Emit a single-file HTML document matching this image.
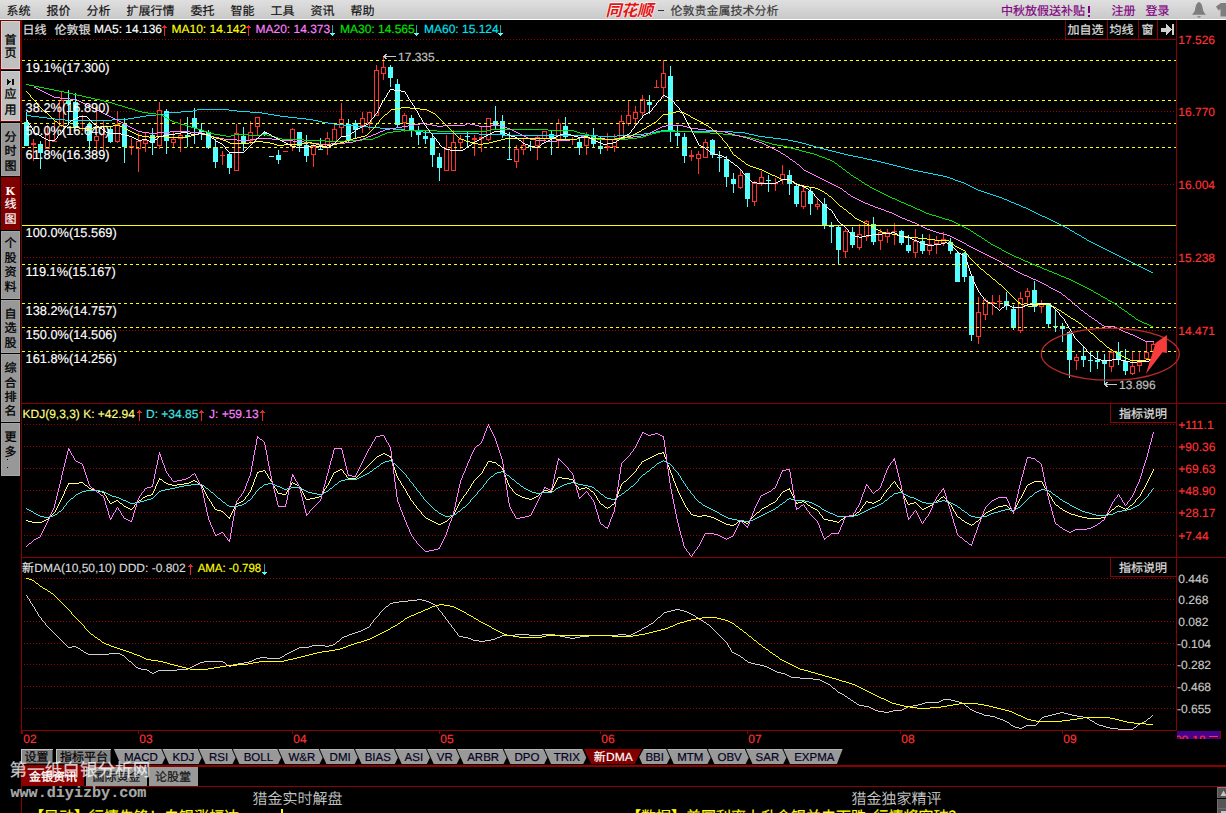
<!DOCTYPE html><html><head><meta charset="utf-8"><title>伦敦贵金属技术分析</title><style>html,body{margin:0;padding:0;background:#000;overflow:hidden}svg{display:block;font-family:"Liberation Sans","Noto Sans CJK SC",sans-serif}text{stroke-width:.16px}</style></head><body><svg width="1226" height="813" viewBox="0 0 1226 813" shape-rendering="crispEdges" text-rendering="geometricPrecision"><rect width="1226" height="813" fill="#000"/><defs><linearGradient id="mg" x1="0" y1="0" x2="0" y2="1"><stop offset="0" stop-color="#dfdfdf"/><stop offset="1" stop-color="#c9c9c9"/></linearGradient></defs><rect x="0" y="0" width="1226" height="19" fill="url(#mg)"/><rect x="0" y="19" width="1226" height="1" fill="#ffffff"/><text x="6.5" y="14.56" font-size="12" fill="#101010" stroke="#101010">系统</text><text x="46.5" y="14.56" font-size="12" fill="#101010" stroke="#101010">报价</text><text x="86.5" y="14.56" font-size="12" fill="#101010" stroke="#101010">分析</text><text x="126.5" y="14.56" font-size="12" fill="#101010" stroke="#101010">扩展行情</text><text x="190.5" y="14.56" font-size="12" fill="#101010" stroke="#101010">委托</text><text x="230.5" y="14.56" font-size="12" fill="#101010" stroke="#101010">智能</text><text x="270.5" y="14.56" font-size="12" fill="#101010" stroke="#101010">工具</text><text x="310.5" y="14.56" font-size="12" fill="#101010" stroke="#101010">资讯</text><text x="350.5" y="14.56" font-size="12" fill="#101010" stroke="#101010">帮助</text><g transform="translate(605.5 15.6) skewX(-14)" fill="#e01818" stroke="#fff" paint-order="stroke" shape-rendering="geometricPrecision"><text x="0 15.7 31.4" y="0" font-size="16" font-weight="bold" style="stroke-width:1.1px" paint-order="stroke">同花顺</text></g><rect x="658" y="10" width="6" height="1" fill="#333"/><text x="670.5" y="14.56" font-size="12" fill="#3a3a3a" stroke="#3a3a3a">伦敦贵金属技术分析</text><text x="1001" y="15.06" font-size="12" fill="#800080" stroke="#800080">中秋放假送补贴</text><rect x="1088" y="6" width="2" height="7" fill="#800080"/><rect x="1088" y="14.5" width="2" height="2" fill="#800080"/><text x="1111.5" y="15.06" font-size="12" fill="#800080" stroke="#800080">注册</text><text x="1145.5" y="15.06" font-size="12" fill="#800080" stroke="#800080">登录</text><path d="M1199 2 C1196 3 1195.5 7 1195 10 C1194.5 12.5 1193 13.5 1192 14.8 L1206 14.8 C1205 13.5 1203.5 12.5 1203 10 C1202.5 7 1202 3 1199 2Z M1196.8 16.2 L1201.2 16.2 L1199 18Z" fill="#7e7e7e" shape-rendering="geometricPrecision"/><path d="M1216 6.5 L1221 3 L1226 3 L1226 16.5 L1220.5 16.5 L1220.5 9 L1218.5 10.5Z" fill="#7e7e7e" shape-rendering="geometricPrecision"/><rect x="0" y="20" width="22" height="102" fill="#800000"/><rect x="1" y="21" width="19" height="48" fill="#ccd6d6"/><rect x="2" y="22" width="17" height="46" fill="#c0c0c0"/><rect x="1" y="70" width="19" height="1" fill="#000"/><rect x="1" y="71" width="19" height="50" fill="#ccd6d6"/><rect x="2" y="72" width="17" height="48" fill="#c0c0c0"/><rect x="1" y="123" width="19" height="53" fill="#a6a6a6"/><rect x="2" y="124" width="17" height="51" fill="#989898"/><rect x="1" y="231" width="19" height="68" fill="#a6a6a6"/><rect x="2" y="232" width="17" height="66" fill="#989898"/><rect x="1" y="300" width="19" height="53" fill="#a6a6a6"/><rect x="2" y="301" width="17" height="51" fill="#989898"/><rect x="1" y="354" width="19" height="68" fill="#a6a6a6"/><rect x="2" y="355" width="17" height="66" fill="#989898"/><rect x="1" y="423" width="19" height="53" fill="#a6a6a6"/><rect x="2" y="424" width="17" height="51" fill="#989898"/><rect x="1" y="177" width="19" height="53" fill="#800000"/><line x1="21.5" y1="122" x2="21.5" y2="476" stroke="#800000"/><text x="4.5" y="44.06" font-size="12" fill="#000" stroke="#000" style="stroke-width:.3px">首</text><text x="4.5" y="56.56" font-size="12" fill="#000" stroke="#000" style="stroke-width:.3px">页</text><text x="4.5" y="98.06" font-size="12" fill="#000" stroke="#000" style="stroke-width:.3px">应</text><text x="4.5" y="113.56" font-size="12" fill="#000" stroke="#000" style="stroke-width:.3px">用</text><text x="4.5" y="140.56" font-size="12" fill="#000" stroke="#000" style="stroke-width:.3px">分</text><text x="4.5" y="155.06" font-size="12" fill="#000" stroke="#000" style="stroke-width:.3px">时</text><text x="4.5" y="169.56" font-size="12" fill="#000" stroke="#000" style="stroke-width:.3px">图</text><text x="4.5" y="247.06" font-size="12" fill="#000" stroke="#000" style="stroke-width:.3px">个</text><text x="4.5" y="261.56" font-size="12" fill="#000" stroke="#000" style="stroke-width:.3px">股</text><text x="4.5" y="276.06" font-size="12" fill="#000" stroke="#000" style="stroke-width:.3px">资</text><text x="4.5" y="290.56" font-size="12" fill="#000" stroke="#000" style="stroke-width:.3px">料</text><text x="4.5" y="317.56" font-size="12" fill="#000" stroke="#000" style="stroke-width:.3px">自</text><text x="4.5" y="332.06" font-size="12" fill="#000" stroke="#000" style="stroke-width:.3px">选</text><text x="4.5" y="346.56" font-size="12" fill="#000" stroke="#000" style="stroke-width:.3px">股</text><text x="4.5" y="372.06" font-size="12" fill="#000" stroke="#000" style="stroke-width:.3px">综</text><text x="4.5" y="386.56" font-size="12" fill="#000" stroke="#000" style="stroke-width:.3px">合</text><text x="4.5" y="401.06" font-size="12" fill="#000" stroke="#000" style="stroke-width:.3px">排</text><text x="4.5" y="415.06" font-size="12" fill="#000" stroke="#000" style="stroke-width:.3px">名</text><text x="4.5" y="441.06" font-size="12" fill="#000" stroke="#000" style="stroke-width:.3px">更</text><text x="4.5" y="455.56" font-size="12" fill="#000" stroke="#000" style="stroke-width:.3px">多</text><text x="4.5" y="208.06" font-size="12" fill="#fff" stroke="#fff">线</text><text x="4.5" y="222.56" font-size="12" fill="#fff" stroke="#fff">图</text><text x="10.5" y="194.5" font-size="12" fill="#fff" stroke="#fff" text-anchor="middle" font-weight="bold" font-family="Liberation Serif">K</text><rect x="7" y="459" width="1.4" height="1.4" fill="#000"/><rect x="7" y="467" width="1.4" height="1.4" fill="#000"/><path d="M7 78.5 L11 81.8 L7 85Z M11.5 78.5h2v6.5h-2z" fill="#101010"/><line x1="21.5" y1="476" x2="21.5" y2="734" stroke="#8c0000"/><line x1="21.5" y1="765" x2="21.5" y2="813" stroke="#8c0000"/><line x1="1176.5" y1="20" x2="1176.5" y2="731" stroke="#8c0000"/><line x1="22" y1="403.5" x2="1226" y2="403.5" stroke="#8c0000"/><line x1="22" y1="557.5" x2="1226" y2="557.5" stroke="#8c0000"/><line x1="22" y1="730.5" x2="1177" y2="730.5" stroke="#8c0000"/><line x1="24" y1="39.5" x2="1065" y2="39.5" stroke="#a00000" stroke-dasharray="1 2"/><line x1="24" y1="111.5" x2="1175" y2="111.5" stroke="#a00000" stroke-dasharray="1 2"/><line x1="24" y1="184.5" x2="1175" y2="184.5" stroke="#a00000" stroke-dasharray="1 2"/><line x1="24" y1="257.5" x2="1175" y2="257.5" stroke="#a00000" stroke-dasharray="1 2"/><line x1="24" y1="330.5" x2="1175" y2="330.5" stroke="#a00000" stroke-dasharray="1 2"/><line x1="24" y1="424.5" x2="1175" y2="424.5" stroke="#a00000" stroke-dasharray="1 2"/><line x1="24" y1="446.5" x2="1175" y2="446.5" stroke="#a00000" stroke-dasharray="1 2"/><line x1="24" y1="468.5" x2="1175" y2="468.5" stroke="#a00000" stroke-dasharray="1 2"/><line x1="24" y1="490.5" x2="1175" y2="490.5" stroke="#a00000" stroke-dasharray="1 2"/><line x1="24" y1="512.5" x2="1175" y2="512.5" stroke="#a00000" stroke-dasharray="1 2"/><line x1="24" y1="535.5" x2="1175" y2="535.5" stroke="#a00000" stroke-dasharray="1 2"/><line x1="24" y1="578.5" x2="1175" y2="578.5" stroke="#a00000" stroke-dasharray="1 2"/><line x1="24" y1="599.5" x2="1175" y2="599.5" stroke="#a00000" stroke-dasharray="1 2"/><line x1="24" y1="621.5" x2="1175" y2="621.5" stroke="#a00000" stroke-dasharray="1 2"/><line x1="24" y1="643.5" x2="1175" y2="643.5" stroke="#a00000" stroke-dasharray="1 2"/><line x1="24" y1="664.5" x2="1175" y2="664.5" stroke="#a00000" stroke-dasharray="1 2"/><line x1="24" y1="686.5" x2="1175" y2="686.5" stroke="#a00000" stroke-dasharray="1 2"/><line x1="24" y1="708.5" x2="1175" y2="708.5" stroke="#a00000" stroke-dasharray="1 2"/><rect x="24" y="122" width="5" height="24" fill="#54ffff"/><rect x="26" y="112" width="1" height="10" fill="#54ffff"/><rect x="31" y="143" width="5" height="2" fill="#ff3232"/><rect x="33" y="139" width="1" height="4" fill="#ff3232"/><rect x="33" y="145" width="1" height="16" fill="#ff3232"/><rect x="38" y="144" width="5" height="9" fill="#54ffff"/><rect x="40" y="141" width="1" height="3" fill="#54ffff"/><rect x="40" y="153" width="1" height="16" fill="#54ffff"/><rect x="45.5" y="133.5" width="4" height="15" fill="#000" stroke="#ff3232"/><rect x="47" y="125" width="1" height="8" fill="#ff3232"/><rect x="52" y="141" width="5" height="1" fill="#ff3232"/><rect x="54" y="120" width="1" height="22" fill="#ff3232"/><rect x="59.5" y="100.5" width="4" height="25" fill="#000" stroke="#ff3232"/><rect x="61" y="92" width="1" height="8" fill="#ff3232"/><rect x="61" y="126" width="1" height="1" fill="#ff3232"/><rect x="66" y="100" width="5" height="4" fill="#54ffff"/><rect x="68" y="90" width="1" height="10" fill="#54ffff"/><rect x="68" y="104" width="1" height="19" fill="#54ffff"/><rect x="73" y="102" width="5" height="25" fill="#54ffff"/><rect x="75" y="93" width="1" height="9" fill="#54ffff"/><rect x="80" y="123" width="5" height="1" fill="#ff3232"/><rect x="82" y="115" width="1" height="16" fill="#ff3232"/><rect x="87" y="124" width="5" height="17" fill="#54ffff"/><rect x="89" y="122" width="1" height="2" fill="#54ffff"/><rect x="89" y="141" width="1" height="9" fill="#54ffff"/><rect x="94.5" y="136.5" width="4" height="4" fill="#000" stroke="#ff3232"/><rect x="96" y="111" width="1" height="25" fill="#ff3232"/><rect x="96" y="141" width="1" height="9" fill="#ff3232"/><rect x="101" y="134" width="5" height="1" fill="#ff3232"/><rect x="103" y="121" width="1" height="29" fill="#ff3232"/><rect x="108" y="129" width="5" height="13" fill="#54ffff"/><rect x="110" y="126" width="1" height="3" fill="#54ffff"/><rect x="110" y="142" width="1" height="1" fill="#54ffff"/><rect x="115.5" y="124.5" width="4" height="17" fill="#000" stroke="#ff3232"/><rect x="117" y="111" width="1" height="13" fill="#ff3232"/><rect x="117" y="142" width="1" height="1" fill="#ff3232"/><rect x="122" y="124" width="5" height="23" fill="#54ffff"/><rect x="124" y="118" width="1" height="6" fill="#54ffff"/><rect x="124" y="147" width="1" height="16" fill="#54ffff"/><rect x="129" y="146" width="5" height="2" fill="#ff3232"/><rect x="131" y="138" width="1" height="8" fill="#ff3232"/><rect x="131" y="148" width="1" height="7" fill="#ff3232"/><rect x="136.5" y="141.5" width="4" height="7" fill="#000" stroke="#ff3232"/><rect x="138" y="133" width="1" height="8" fill="#ff3232"/><rect x="138" y="149" width="1" height="23" fill="#ff3232"/><rect x="143.5" y="140.5" width="4" height="3" fill="#000" stroke="#ff3232"/><rect x="145" y="132" width="1" height="8" fill="#ff3232"/><rect x="145" y="144" width="1" height="8" fill="#ff3232"/><rect x="150" y="135" width="5" height="8" fill="#54ffff"/><rect x="152" y="128" width="1" height="7" fill="#54ffff"/><rect x="152" y="143" width="1" height="12" fill="#54ffff"/><rect x="157.5" y="110.5" width="4" height="35" fill="#000" stroke="#ff3232"/><rect x="159" y="102" width="1" height="8" fill="#ff3232"/><rect x="159" y="146" width="1" height="3" fill="#ff3232"/><rect x="164" y="111" width="5" height="30" fill="#54ffff"/><rect x="166" y="109" width="1" height="2" fill="#54ffff"/><rect x="166" y="141" width="1" height="13" fill="#54ffff"/><rect x="171.5" y="139.5" width="4" height="3" fill="#000" stroke="#ff3232"/><rect x="173" y="131" width="1" height="8" fill="#ff3232"/><rect x="173" y="143" width="1" height="5" fill="#ff3232"/><rect x="178.5" y="135.5" width="4" height="3" fill="#000" stroke="#ff3232"/><rect x="180" y="119" width="1" height="16" fill="#ff3232"/><rect x="180" y="139" width="1" height="13" fill="#ff3232"/><rect x="185" y="135" width="5" height="2" fill="#54ffff"/><rect x="187" y="117" width="1" height="18" fill="#54ffff"/><rect x="187" y="137" width="1" height="10" fill="#54ffff"/><rect x="192" y="118" width="5" height="10" fill="#54ffff"/><rect x="194" y="108" width="1" height="10" fill="#54ffff"/><rect x="194" y="128" width="1" height="16" fill="#54ffff"/><rect x="199" y="130" width="5" height="2" fill="#54ffff"/><rect x="201" y="123" width="1" height="7" fill="#54ffff"/><rect x="201" y="132" width="1" height="8" fill="#54ffff"/><rect x="206" y="132" width="5" height="16" fill="#54ffff"/><rect x="208" y="130" width="1" height="2" fill="#54ffff"/><rect x="208" y="148" width="1" height="1" fill="#54ffff"/><rect x="213" y="147" width="5" height="15" fill="#54ffff"/><rect x="215" y="139" width="1" height="8" fill="#54ffff"/><rect x="215" y="162" width="1" height="6" fill="#54ffff"/><rect x="220" y="155" width="5" height="1" fill="#ff3232"/><rect x="222" y="151" width="1" height="14" fill="#ff3232"/><rect x="227" y="154" width="5" height="14" fill="#54ffff"/><rect x="229" y="153" width="1" height="1" fill="#54ffff"/><rect x="229" y="168" width="1" height="6" fill="#54ffff"/><rect x="234.5" y="133.5" width="4" height="37" fill="#000" stroke="#ff3232"/><rect x="236" y="124" width="1" height="9" fill="#ff3232"/><rect x="241" y="136" width="5" height="7" fill="#54ffff"/><rect x="243" y="127" width="1" height="9" fill="#54ffff"/><rect x="243" y="143" width="1" height="8" fill="#54ffff"/><rect x="248.5" y="132.5" width="4" height="8" fill="#000" stroke="#ff3232"/><rect x="250" y="121" width="1" height="11" fill="#ff3232"/><rect x="250" y="141" width="1" height="3" fill="#ff3232"/><rect x="255.5" y="117.5" width="4" height="9" fill="#000" stroke="#ff3232"/><rect x="257" y="127" width="1" height="8" fill="#ff3232"/><rect x="262" y="133" width="5" height="1" fill="#54ffff"/><rect x="264" y="131" width="1" height="5" fill="#54ffff"/><rect x="269" y="156" width="5" height="1" fill="#54ffff"/><rect x="276" y="155" width="5" height="5" fill="#54ffff"/><rect x="278" y="150" width="1" height="5" fill="#54ffff"/><rect x="278" y="160" width="1" height="4" fill="#54ffff"/><rect x="283" y="151" width="5" height="1" fill="#ff3232"/><rect x="290.5" y="129.5" width="4" height="17" fill="#000" stroke="#ff3232"/><rect x="292" y="128" width="1" height="1" fill="#ff3232"/><rect x="292" y="147" width="1" height="4" fill="#ff3232"/><rect x="297" y="132" width="5" height="14" fill="#54ffff"/><rect x="299" y="146" width="1" height="6" fill="#54ffff"/><rect x="304" y="145" width="5" height="11" fill="#54ffff"/><rect x="306" y="135" width="1" height="10" fill="#54ffff"/><rect x="306" y="156" width="1" height="6" fill="#54ffff"/><rect x="311.5" y="146.5" width="4" height="8" fill="#000" stroke="#ff3232"/><rect x="313" y="144" width="1" height="2" fill="#ff3232"/><rect x="313" y="155" width="1" height="12" fill="#ff3232"/><rect x="318" y="149" width="5" height="1" fill="#54ffff"/><rect x="320" y="138" width="1" height="12" fill="#54ffff"/><rect x="325.5" y="138.5" width="4" height="9" fill="#000" stroke="#ff3232"/><rect x="327" y="132" width="1" height="6" fill="#ff3232"/><rect x="327" y="148" width="1" height="7" fill="#ff3232"/><rect x="332.5" y="129.5" width="4" height="12" fill="#000" stroke="#ff3232"/><rect x="334" y="125" width="1" height="4" fill="#ff3232"/><rect x="339.5" y="119.5" width="4" height="8" fill="#000" stroke="#ff3232"/><rect x="341" y="103" width="1" height="16" fill="#ff3232"/><rect x="341" y="128" width="1" height="8" fill="#ff3232"/><rect x="346" y="124" width="5" height="16" fill="#54ffff"/><rect x="348" y="119" width="1" height="5" fill="#54ffff"/><rect x="348" y="140" width="1" height="3" fill="#54ffff"/><rect x="353" y="123" width="5" height="7" fill="#54ffff"/><rect x="355" y="120" width="1" height="3" fill="#54ffff"/><rect x="355" y="130" width="1" height="9" fill="#54ffff"/><rect x="360.5" y="118.5" width="4" height="7" fill="#000" stroke="#ff3232"/><rect x="362" y="112" width="1" height="6" fill="#ff3232"/><rect x="362" y="126" width="1" height="7" fill="#ff3232"/><rect x="367.5" y="112.5" width="4" height="10" fill="#000" stroke="#ff3232"/><rect x="369" y="123" width="1" height="7" fill="#ff3232"/><rect x="374.5" y="70.5" width="4" height="45" fill="#000" stroke="#ff3232"/><rect x="376" y="65" width="1" height="5" fill="#ff3232"/><rect x="381.5" y="67.5" width="4" height="6" fill="#000" stroke="#ff3232"/><rect x="383" y="57" width="1" height="10" fill="#ff3232"/><rect x="383" y="74" width="1" height="6" fill="#ff3232"/><rect x="388" y="67" width="5" height="11" fill="#54ffff"/><rect x="390" y="65" width="1" height="2" fill="#54ffff"/><rect x="390" y="78" width="1" height="9" fill="#54ffff"/><rect x="395" y="84" width="5" height="41" fill="#54ffff"/><rect x="397" y="79" width="1" height="5" fill="#54ffff"/><rect x="397" y="125" width="1" height="3" fill="#54ffff"/><rect x="402.5" y="115.5" width="4" height="7" fill="#000" stroke="#ff3232"/><rect x="404" y="113" width="1" height="2" fill="#ff3232"/><rect x="404" y="123" width="1" height="9" fill="#ff3232"/><rect x="409" y="118" width="5" height="13" fill="#54ffff"/><rect x="411" y="115" width="1" height="3" fill="#54ffff"/><rect x="411" y="131" width="1" height="6" fill="#54ffff"/><rect x="416" y="132" width="5" height="3" fill="#54ffff"/><rect x="418" y="126" width="1" height="6" fill="#54ffff"/><rect x="418" y="135" width="1" height="10" fill="#54ffff"/><rect x="423" y="136" width="5" height="3" fill="#54ffff"/><rect x="425" y="131" width="1" height="5" fill="#54ffff"/><rect x="425" y="139" width="1" height="5" fill="#54ffff"/><rect x="430" y="138" width="5" height="17" fill="#54ffff"/><rect x="432" y="133" width="1" height="5" fill="#54ffff"/><rect x="432" y="155" width="1" height="12" fill="#54ffff"/><rect x="437" y="157" width="5" height="11" fill="#54ffff"/><rect x="439" y="153" width="1" height="4" fill="#54ffff"/><rect x="439" y="168" width="1" height="13" fill="#54ffff"/><rect x="444.5" y="149.5" width="4" height="21" fill="#000" stroke="#ff3232"/><rect x="446" y="135" width="1" height="14" fill="#ff3232"/><rect x="451.5" y="142.5" width="4" height="28" fill="#000" stroke="#ff3232"/><rect x="453" y="130" width="1" height="12" fill="#ff3232"/><rect x="458.5" y="139.5" width="4" height="3" fill="#000" stroke="#ff3232"/><rect x="460" y="135" width="1" height="4" fill="#ff3232"/><rect x="460" y="143" width="1" height="6" fill="#ff3232"/><rect x="465" y="136" width="5" height="1" fill="#54ffff"/><rect x="467" y="131" width="1" height="16" fill="#54ffff"/><rect x="472" y="138" width="5" height="2" fill="#ff3232"/><rect x="474" y="135" width="1" height="3" fill="#ff3232"/><rect x="474" y="140" width="1" height="16" fill="#ff3232"/><rect x="479" y="137" width="5" height="2" fill="#ff3232"/><rect x="481" y="126" width="1" height="11" fill="#ff3232"/><rect x="481" y="139" width="1" height="13" fill="#ff3232"/><rect x="486.5" y="118.5" width="4" height="21" fill="#000" stroke="#ff3232"/><rect x="488" y="140" width="1" height="1" fill="#ff3232"/><rect x="493" y="121" width="5" height="5" fill="#54ffff"/><rect x="495" y="106" width="1" height="15" fill="#54ffff"/><rect x="495" y="126" width="1" height="3" fill="#54ffff"/><rect x="500" y="121" width="5" height="14" fill="#54ffff"/><rect x="502" y="115" width="1" height="6" fill="#54ffff"/><rect x="502" y="135" width="1" height="3" fill="#54ffff"/><rect x="507" y="159" width="5" height="1" fill="#54ffff"/><rect x="509" y="132" width="1" height="28" fill="#54ffff"/><rect x="514.5" y="149.5" width="4" height="12" fill="#000" stroke="#ff3232"/><rect x="516" y="145" width="1" height="4" fill="#ff3232"/><rect x="516" y="162" width="1" height="6" fill="#ff3232"/><rect x="521.5" y="145.5" width="4" height="4" fill="#000" stroke="#ff3232"/><rect x="523" y="139" width="1" height="6" fill="#ff3232"/><rect x="523" y="150" width="1" height="5" fill="#ff3232"/><rect x="528" y="146" width="5" height="1" fill="#54ffff"/><rect x="530" y="141" width="1" height="10" fill="#54ffff"/><rect x="535.5" y="137.5" width="4" height="8" fill="#000" stroke="#ff3232"/><rect x="537" y="136" width="1" height="1" fill="#ff3232"/><rect x="537" y="146" width="1" height="14" fill="#ff3232"/><rect x="542.5" y="131.5" width="4" height="7" fill="#000" stroke="#ff3232"/><rect x="544" y="139" width="1" height="3" fill="#ff3232"/><rect x="549" y="134" width="5" height="5" fill="#54ffff"/><rect x="551" y="131" width="1" height="3" fill="#54ffff"/><rect x="551" y="139" width="1" height="16" fill="#54ffff"/><rect x="556.5" y="123.5" width="4" height="17" fill="#000" stroke="#ff3232"/><rect x="558" y="119" width="1" height="4" fill="#ff3232"/><rect x="558" y="141" width="1" height="6" fill="#ff3232"/><rect x="563" y="126" width="5" height="11" fill="#54ffff"/><rect x="565" y="117" width="1" height="9" fill="#54ffff"/><rect x="565" y="137" width="1" height="3" fill="#54ffff"/><rect x="570" y="139" width="5" height="1" fill="#ff3232"/><rect x="572" y="137" width="1" height="8" fill="#ff3232"/><rect x="577" y="142" width="5" height="6" fill="#54ffff"/><rect x="579" y="137" width="1" height="5" fill="#54ffff"/><rect x="579" y="148" width="1" height="7" fill="#54ffff"/><rect x="584.5" y="137.5" width="4" height="8" fill="#000" stroke="#ff3232"/><rect x="586" y="132" width="1" height="5" fill="#ff3232"/><rect x="586" y="146" width="1" height="9" fill="#ff3232"/><rect x="591" y="136" width="5" height="8" fill="#54ffff"/><rect x="593" y="128" width="1" height="8" fill="#54ffff"/><rect x="593" y="144" width="1" height="3" fill="#54ffff"/><rect x="598" y="146" width="5" height="3" fill="#54ffff"/><rect x="600" y="137" width="1" height="9" fill="#54ffff"/><rect x="600" y="149" width="1" height="5" fill="#54ffff"/><rect x="605" y="146" width="5" height="2" fill="#ff3232"/><rect x="607" y="133" width="1" height="13" fill="#ff3232"/><rect x="607" y="148" width="1" height="3" fill="#ff3232"/><rect x="612.5" y="139.5" width="4" height="7" fill="#000" stroke="#ff3232"/><rect x="614" y="134" width="1" height="5" fill="#ff3232"/><rect x="614" y="147" width="1" height="5" fill="#ff3232"/><rect x="619.5" y="121.5" width="4" height="16" fill="#000" stroke="#ff3232"/><rect x="621" y="115" width="1" height="6" fill="#ff3232"/><rect x="626.5" y="115.5" width="4" height="8" fill="#000" stroke="#ff3232"/><rect x="628" y="100" width="1" height="15" fill="#ff3232"/><rect x="628" y="124" width="1" height="2" fill="#ff3232"/><rect x="633.5" y="112.5" width="4" height="6" fill="#000" stroke="#ff3232"/><rect x="635" y="106" width="1" height="6" fill="#ff3232"/><rect x="635" y="119" width="1" height="6" fill="#ff3232"/><rect x="640.5" y="99.5" width="4" height="13" fill="#000" stroke="#ff3232"/><rect x="642" y="95" width="1" height="4" fill="#ff3232"/><rect x="642" y="113" width="1" height="4" fill="#ff3232"/><rect x="647" y="102" width="5" height="3" fill="#54ffff"/><rect x="649" y="95" width="1" height="7" fill="#54ffff"/><rect x="649" y="105" width="1" height="9" fill="#54ffff"/><rect x="654" y="87" width="5" height="1" fill="#ff3232"/><rect x="656" y="80" width="1" height="8" fill="#ff3232"/><rect x="661.5" y="73.5" width="4" height="14" fill="#000" stroke="#ff3232"/><rect x="663" y="60" width="1" height="13" fill="#ff3232"/><rect x="663" y="88" width="1" height="10" fill="#ff3232"/><rect x="668" y="76" width="5" height="56" fill="#54ffff"/><rect x="670" y="66" width="1" height="10" fill="#54ffff"/><rect x="670" y="132" width="1" height="10" fill="#54ffff"/><rect x="675" y="133" width="5" height="3" fill="#54ffff"/><rect x="677" y="126" width="1" height="7" fill="#54ffff"/><rect x="677" y="136" width="1" height="10" fill="#54ffff"/><rect x="682" y="137" width="5" height="19" fill="#54ffff"/><rect x="684" y="133" width="1" height="4" fill="#54ffff"/><rect x="684" y="156" width="1" height="7" fill="#54ffff"/><rect x="689" y="155" width="5" height="2" fill="#ff3232"/><rect x="691" y="150" width="1" height="5" fill="#ff3232"/><rect x="691" y="157" width="1" height="4" fill="#ff3232"/><rect x="696.5" y="154.5" width="4" height="4" fill="#000" stroke="#ff3232"/><rect x="698" y="151" width="1" height="3" fill="#ff3232"/><rect x="698" y="159" width="1" height="15" fill="#ff3232"/><rect x="703.5" y="142.5" width="4" height="15" fill="#000" stroke="#ff3232"/><rect x="705" y="139" width="1" height="3" fill="#ff3232"/><rect x="710" y="140" width="5" height="15" fill="#54ffff"/><rect x="712" y="139" width="1" height="1" fill="#54ffff"/><rect x="712" y="155" width="1" height="3" fill="#54ffff"/><rect x="717" y="157" width="5" height="1" fill="#54ffff"/><rect x="719" y="151" width="1" height="21" fill="#54ffff"/><rect x="724" y="159" width="5" height="18" fill="#54ffff"/><rect x="726" y="156" width="1" height="3" fill="#54ffff"/><rect x="726" y="177" width="1" height="10" fill="#54ffff"/><rect x="731" y="179" width="5" height="5" fill="#54ffff"/><rect x="733" y="173" width="1" height="6" fill="#54ffff"/><rect x="733" y="184" width="1" height="9" fill="#54ffff"/><rect x="738.5" y="175.5" width="4" height="12" fill="#000" stroke="#ff3232"/><rect x="740" y="170" width="1" height="5" fill="#ff3232"/><rect x="740" y="188" width="1" height="1" fill="#ff3232"/><rect x="745" y="173" width="5" height="26" fill="#54ffff"/><rect x="747" y="199" width="1" height="8" fill="#54ffff"/><rect x="752.5" y="183.5" width="4" height="18" fill="#000" stroke="#ff3232"/><rect x="754" y="181" width="1" height="2" fill="#ff3232"/><rect x="754" y="202" width="1" height="4" fill="#ff3232"/><rect x="759.5" y="177.5" width="4" height="5" fill="#000" stroke="#ff3232"/><rect x="761" y="171" width="1" height="6" fill="#ff3232"/><rect x="761" y="183" width="1" height="3" fill="#ff3232"/><rect x="766" y="180" width="5" height="1" fill="#54ffff"/><rect x="768" y="175" width="1" height="17" fill="#54ffff"/><rect x="773" y="183" width="5" height="1" fill="#ff3232"/><rect x="775" y="178" width="1" height="13" fill="#ff3232"/><rect x="780.5" y="174.5" width="4" height="5" fill="#000" stroke="#ff3232"/><rect x="782" y="165" width="1" height="9" fill="#ff3232"/><rect x="782" y="180" width="1" height="4" fill="#ff3232"/><rect x="787" y="175" width="5" height="9" fill="#54ffff"/><rect x="789" y="170" width="1" height="5" fill="#54ffff"/><rect x="789" y="184" width="1" height="11" fill="#54ffff"/><rect x="794" y="186" width="5" height="18" fill="#54ffff"/><rect x="796" y="185" width="1" height="1" fill="#54ffff"/><rect x="796" y="204" width="1" height="3" fill="#54ffff"/><rect x="801.5" y="191.5" width="4" height="15" fill="#000" stroke="#ff3232"/><rect x="803" y="187" width="1" height="4" fill="#ff3232"/><rect x="803" y="207" width="1" height="2" fill="#ff3232"/><rect x="808" y="191" width="5" height="13" fill="#54ffff"/><rect x="810" y="188" width="1" height="3" fill="#54ffff"/><rect x="810" y="204" width="1" height="11" fill="#54ffff"/><rect x="815.5" y="204.5" width="4" height="2" fill="#000" stroke="#ff3232"/><rect x="817" y="198" width="1" height="6" fill="#ff3232"/><rect x="817" y="207" width="1" height="3" fill="#ff3232"/><rect x="822" y="204" width="5" height="22" fill="#54ffff"/><rect x="824" y="198" width="1" height="6" fill="#54ffff"/><rect x="824" y="226" width="1" height="3" fill="#54ffff"/><rect x="829" y="226" width="5" height="1" fill="#54ffff"/><rect x="831" y="222" width="1" height="21" fill="#54ffff"/><rect x="836" y="227" width="5" height="23" fill="#54ffff"/><rect x="838" y="226" width="1" height="1" fill="#54ffff"/><rect x="838" y="250" width="1" height="14" fill="#54ffff"/><rect x="843.5" y="231.5" width="4" height="20" fill="#000" stroke="#ff3232"/><rect x="845" y="229" width="1" height="2" fill="#ff3232"/><rect x="845" y="252" width="1" height="6" fill="#ff3232"/><rect x="850" y="232" width="5" height="13" fill="#54ffff"/><rect x="852" y="227" width="1" height="5" fill="#54ffff"/><rect x="852" y="245" width="1" height="3" fill="#54ffff"/><rect x="857.5" y="234.5" width="4" height="13" fill="#000" stroke="#ff3232"/><rect x="859" y="224" width="1" height="10" fill="#ff3232"/><rect x="859" y="248" width="1" height="2" fill="#ff3232"/><rect x="864.5" y="221.5" width="4" height="15" fill="#000" stroke="#ff3232"/><rect x="866" y="220" width="1" height="1" fill="#ff3232"/><rect x="866" y="237" width="1" height="4" fill="#ff3232"/><rect x="871" y="224" width="5" height="18" fill="#54ffff"/><rect x="873" y="217" width="1" height="7" fill="#54ffff"/><rect x="873" y="242" width="1" height="3" fill="#54ffff"/><rect x="878.5" y="232.5" width="4" height="8" fill="#000" stroke="#ff3232"/><rect x="880" y="229" width="1" height="3" fill="#ff3232"/><rect x="880" y="241" width="1" height="9" fill="#ff3232"/><rect x="885.5" y="232.5" width="4" height="4" fill="#000" stroke="#ff3232"/><rect x="887" y="229" width="1" height="3" fill="#ff3232"/><rect x="887" y="237" width="1" height="6" fill="#ff3232"/><rect x="892" y="231" width="5" height="1" fill="#ff3232"/><rect x="894" y="223" width="1" height="22" fill="#ff3232"/><rect x="899" y="231" width="5" height="12" fill="#54ffff"/><rect x="901" y="230" width="1" height="1" fill="#54ffff"/><rect x="901" y="243" width="1" height="2" fill="#54ffff"/><rect x="906" y="245" width="5" height="6" fill="#54ffff"/><rect x="908" y="235" width="1" height="10" fill="#54ffff"/><rect x="908" y="251" width="1" height="2" fill="#54ffff"/><rect x="913.5" y="241.5" width="4" height="11" fill="#000" stroke="#ff3232"/><rect x="915" y="229" width="1" height="12" fill="#ff3232"/><rect x="915" y="253" width="1" height="5" fill="#ff3232"/><rect x="920" y="241" width="5" height="10" fill="#54ffff"/><rect x="922" y="234" width="1" height="7" fill="#54ffff"/><rect x="922" y="251" width="1" height="3" fill="#54ffff"/><rect x="927.5" y="244.5" width="4" height="6" fill="#000" stroke="#ff3232"/><rect x="929" y="234" width="1" height="10" fill="#ff3232"/><rect x="929" y="251" width="1" height="4" fill="#ff3232"/><rect x="934.5" y="240.5" width="4" height="3" fill="#000" stroke="#ff3232"/><rect x="936" y="236" width="1" height="4" fill="#ff3232"/><rect x="936" y="244" width="1" height="10" fill="#ff3232"/><rect x="941.5" y="239.5" width="4" height="3" fill="#000" stroke="#ff3232"/><rect x="943" y="232" width="1" height="7" fill="#ff3232"/><rect x="943" y="243" width="1" height="3" fill="#ff3232"/><rect x="948" y="242" width="5" height="9" fill="#54ffff"/><rect x="950" y="238" width="1" height="4" fill="#54ffff"/><rect x="950" y="251" width="1" height="3" fill="#54ffff"/><rect x="955" y="253" width="5" height="29" fill="#54ffff"/><rect x="957" y="252" width="1" height="1" fill="#54ffff"/><rect x="962" y="253" width="5" height="24" fill="#54ffff"/><rect x="964" y="252" width="1" height="1" fill="#54ffff"/><rect x="964" y="277" width="1" height="5" fill="#54ffff"/><rect x="969" y="276" width="5" height="59" fill="#54ffff"/><rect x="971" y="275" width="1" height="1" fill="#54ffff"/><rect x="971" y="335" width="1" height="6" fill="#54ffff"/><rect x="976.5" y="312.5" width="4" height="24" fill="#000" stroke="#ff3232"/><rect x="978" y="297" width="1" height="15" fill="#ff3232"/><rect x="978" y="337" width="1" height="7" fill="#ff3232"/><rect x="983.5" y="300.5" width="4" height="14" fill="#000" stroke="#ff3232"/><rect x="985" y="298" width="1" height="2" fill="#ff3232"/><rect x="985" y="315" width="1" height="5" fill="#ff3232"/><rect x="990" y="302" width="5" height="2" fill="#ff3232"/><rect x="992" y="295" width="1" height="7" fill="#ff3232"/><rect x="992" y="304" width="1" height="11" fill="#ff3232"/><rect x="997" y="301" width="5" height="1" fill="#ff3232"/><rect x="999" y="295" width="1" height="13" fill="#ff3232"/><rect x="1004" y="301" width="5" height="5" fill="#54ffff"/><rect x="1006" y="292" width="1" height="9" fill="#54ffff"/><rect x="1006" y="306" width="1" height="4" fill="#54ffff"/><rect x="1011" y="309" width="5" height="19" fill="#54ffff"/><rect x="1013" y="305" width="1" height="4" fill="#54ffff"/><rect x="1013" y="328" width="1" height="2" fill="#54ffff"/><rect x="1018.5" y="298.5" width="4" height="32" fill="#000" stroke="#ff3232"/><rect x="1020" y="292" width="1" height="6" fill="#ff3232"/><rect x="1020" y="331" width="1" height="2" fill="#ff3232"/><rect x="1025.5" y="291.5" width="4" height="5" fill="#000" stroke="#ff3232"/><rect x="1027" y="288" width="1" height="3" fill="#ff3232"/><rect x="1027" y="297" width="1" height="8" fill="#ff3232"/><rect x="1032" y="290" width="5" height="17" fill="#54ffff"/><rect x="1034" y="281" width="1" height="9" fill="#54ffff"/><rect x="1034" y="307" width="1" height="5" fill="#54ffff"/><rect x="1039.5" y="304.5" width="4" height="2" fill="#000" stroke="#ff3232"/><rect x="1041" y="300" width="1" height="4" fill="#ff3232"/><rect x="1041" y="307" width="1" height="6" fill="#ff3232"/><rect x="1046" y="304" width="5" height="20" fill="#54ffff"/><rect x="1048" y="303" width="1" height="1" fill="#54ffff"/><rect x="1048" y="324" width="1" height="3" fill="#54ffff"/><rect x="1053" y="326" width="5" height="1" fill="#54ffff"/><rect x="1055" y="309" width="1" height="23" fill="#54ffff"/><rect x="1060" y="326" width="5" height="3" fill="#54ffff"/><rect x="1062" y="323" width="1" height="3" fill="#54ffff"/><rect x="1062" y="329" width="1" height="13" fill="#54ffff"/><rect x="1067" y="332" width="5" height="28" fill="#54ffff"/><rect x="1069" y="331" width="1" height="1" fill="#54ffff"/><rect x="1069" y="360" width="1" height="18" fill="#54ffff"/><rect x="1074.5" y="357.5" width="4" height="3" fill="#000" stroke="#ff3232"/><rect x="1076" y="354" width="1" height="3" fill="#ff3232"/><rect x="1076" y="361" width="1" height="9" fill="#ff3232"/><rect x="1081" y="356" width="5" height="4" fill="#54ffff"/><rect x="1083" y="347" width="1" height="9" fill="#54ffff"/><rect x="1083" y="360" width="1" height="7" fill="#54ffff"/><rect x="1088" y="360" width="5" height="1" fill="#54ffff"/><rect x="1090" y="352" width="1" height="20" fill="#54ffff"/><rect x="1095" y="360" width="5" height="2" fill="#54ffff"/><rect x="1097" y="352" width="1" height="8" fill="#54ffff"/><rect x="1097" y="362" width="1" height="7" fill="#54ffff"/><rect x="1102" y="360" width="5" height="4" fill="#54ffff"/><rect x="1104" y="354" width="1" height="6" fill="#54ffff"/><rect x="1104" y="364" width="1" height="21" fill="#54ffff"/><rect x="1109.5" y="352.5" width="4" height="14" fill="#000" stroke="#ff3232"/><rect x="1111" y="350" width="1" height="2" fill="#ff3232"/><rect x="1111" y="367" width="1" height="5" fill="#ff3232"/><rect x="1116" y="352" width="5" height="7" fill="#54ffff"/><rect x="1118" y="342" width="1" height="10" fill="#54ffff"/><rect x="1118" y="359" width="1" height="6" fill="#54ffff"/><rect x="1123" y="361" width="5" height="10" fill="#54ffff"/><rect x="1125" y="349" width="1" height="12" fill="#54ffff"/><rect x="1125" y="371" width="1" height="4" fill="#54ffff"/><rect x="1130.5" y="366.5" width="4" height="7" fill="#000" stroke="#ff3232"/><rect x="1132" y="352" width="1" height="14" fill="#ff3232"/><rect x="1132" y="374" width="1" height="1" fill="#ff3232"/><rect x="1137.5" y="362.5" width="4" height="3" fill="#000" stroke="#ff3232"/><rect x="1139" y="352" width="1" height="10" fill="#ff3232"/><rect x="1139" y="366" width="1" height="6" fill="#ff3232"/><rect x="1144.5" y="352.5" width="4" height="6" fill="#000" stroke="#ff3232"/><rect x="1146" y="342" width="1" height="10" fill="#ff3232"/><rect x="1146" y="359" width="1" height="1" fill="#ff3232"/><rect x="1151.5" y="344.5" width="4" height="7" fill="#000" stroke="#ff3232"/><rect x="1153" y="342" width="1" height="2" fill="#ff3232"/><rect x="1153" y="352" width="1" height="1" fill="#ff3232"/><line x1="22" y1="60.5" x2="1176" y2="60.5" stroke="#ffff00" stroke-dasharray="3 3"/><line x1="22" y1="100.5" x2="1176" y2="100.5" stroke="#ffff00" stroke-dasharray="3 3"/><line x1="22" y1="123.5" x2="1176" y2="123.5" stroke="#ffff00" stroke-dasharray="3 3"/><line x1="22" y1="147.5" x2="1176" y2="147.5" stroke="#ffff00" stroke-dasharray="3 3"/><line x1="22" y1="225.5" x2="1176" y2="225.5" stroke="#ffff00"/><line x1="22" y1="264.5" x2="1176" y2="264.5" stroke="#ffff00" stroke-dasharray="3 3"/><line x1="22" y1="303.5" x2="1176" y2="303.5" stroke="#ffff00" stroke-dasharray="3 3"/><line x1="22" y1="327.5" x2="1176" y2="327.5" stroke="#ffff00" stroke-dasharray="3 3"/><line x1="22" y1="351.5" x2="1176" y2="351.5" stroke="#ffff00" stroke-dasharray="3 3"/><path fill="none" stroke="#02e2f4" d="M197 109.5h32M193 110.5h4M229 110.5h8M181 111.5h12M237 111.5h13M169 112.5h12M250 112.5h12M165 113.5h4M262 113.5h6M156 114.5h9M268 114.5h6M26 115.5h5M146 115.5h10M274 115.5h6M31 116.5h8M140 116.5h6M280 116.5h8M39 117.5h8M134 117.5h6M288 117.5h9M47 118.5h8M128 118.5h6M297 118.5h9M55 119.5h10M112 119.5h16M306 119.5h7M65 120.5h47M313 120.5h5M318 121.5h4M322 122.5h6M328 123.5h6M334 124.5h10M344 125.5h12M356 126.5h12M368 127.5h12M380 128.5h13M393 129.5h12M405 130.5h10M661 130.5h14M415 131.5h8M656 131.5h5M675 131.5h58M423 132.5h8M651 132.5h5M733 132.5h12M431 133.5h48M644 133.5h7M745 133.5h4M479 134.5h24M634 134.5h10M749 134.5h5M503 135.5h95M617 135.5h17M754 135.5h4M598 136.5h19M758 136.5h7M765 137.5h8M773 138.5h8M781 139.5h7M788 140.5h5M793 141.5h5M798 142.5h4M802 143.5h4M806 144.5h3M809 145.5h4M813 146.5h3M816 147.5h4M820 148.5h4M824 149.5h4M828 150.5h4M832 151.5h4M836 152.5h4M840 153.5h4M844 154.5h4M848 155.5h5M853 156.5h5M858 157.5h5M863 158.5h4M867 159.5h5M872 160.5h5M877 161.5h4M881 162.5h4M885 163.5h4M889 164.5h4M893 165.5h4M897 166.5h4M901 167.5h4M905 168.5h4M909 169.5h4M913 170.5h5M918 171.5h5M923 172.5h5M928 173.5h5M933 174.5h5M938 175.5h5M943 176.5h4M947 177.5h3M950 178.5h3M953 179.5h2M955 180.5h3M958 181.5h3M961 182.5h3M964 183.5h2M966 184.5h2M968 185.5h2M970 186.5h2M972 187.5h2M974 188.5h2M976 189.5h2M978 190.5h3M981 191.5h3M984 192.5h3M987 193.5h3M990 194.5h3M993 195.5h3M996 196.5h3M999 197.5h3M1002 198.5h2M1004 199.5h3M1007 200.5h2M1009 201.5h2M1011 202.5h3M1014 203.5h2M1016 204.5h3M1019 205.5h2M1021 206.5h2M1023 207.5h3M1026 208.5h2M1028 209.5h2M1030 210.5h2M1032 211.5h2M1034 212.5h2M1036 213.5h2M1038 214.5h2M1040 215.5h2M1042 216.5h3M1045 217.5h2M1047 218.5h2M1049 219.5h2M1051 220.5h2M1053 221.5h2M1055 222.5h2M1057 223.5h2M1059 224.5h2M1061 225.5h2M1063 226.5h2M1065 227.5h2M1067 228.5h2M1070 230.5h2M1072 231.5h2M1075 233.5h2M1077 234.5h2M1079 235.5h2M1082 237.5h2M1084 238.5h2M1087 240.5h2M1089 241.5h2M1091 242.5h2M1093 243.5h2M1095 244.5h2M1097 245.5h2M1099 246.5h2M1101 247.5h2M1103 248.5h2M1105 249.5h2M1107 250.5h2M1109 251.5h2M1111 252.5h2M1113 253.5h2M1115 254.5h2M1117 255.5h2M1119 256.5h2M1121 257.5h2M1123 258.5h2M1125 259.5h2M1127 260.5h2M1129 261.5h2M1131 262.5h2M1133 263.5h2M1135 264.5h2M1137 265.5h2M1139 266.5h2M1141 267.5h2M1143 268.5h2M1145 269.5h2M1147 270.5h2M1149 271.5h2M1151 272.5h2M1069.5 229v1M1074.5 232v1M1081.5 236v1M1086.5 239v1"/><path fill="none" stroke="#00e600" d="M26 84.5h3M29 85.5h5M34 86.5h5M39 87.5h5M44 88.5h5M49 89.5h5M54 90.5h5M59 91.5h5M64 92.5h4M68 93.5h5M73 94.5h4M77 95.5h5M82 96.5h4M86 97.5h5M91 98.5h4M95 99.5h5M100 100.5h4M104 101.5h4M108 102.5h4M112 103.5h3M115 104.5h3M118 105.5h4M122 106.5h3M125 107.5h3M128 108.5h4M132 109.5h3M135 110.5h3M138 111.5h4M142 112.5h6M148 113.5h8M156 114.5h5M161 115.5h2M163 116.5h2M165 117.5h2M168 119.5h2M170 120.5h2M172 121.5h2M174 122.5h4M178 123.5h3M181 124.5h4M185 125.5h3M188 126.5h3M191 127.5h4M195 128.5h3M198 129.5h3M491 129.5h57M201 130.5h3M401 130.5h36M487 130.5h4M548 130.5h26M204 131.5h3M393 131.5h8M437 131.5h50M574 131.5h3M660 131.5h34M207 132.5h3M387 132.5h6M577 132.5h3M656 132.5h4M694 132.5h16M210 133.5h4M385 133.5h2M580 133.5h5M652 133.5h4M710 133.5h13M214 134.5h6M235 134.5h13M262 134.5h5M382 134.5h3M585 134.5h4M649 134.5h3M723 134.5h9M220 135.5h6M231 135.5h4M248 135.5h14M267 135.5h4M380 135.5h2M589 135.5h2M646 135.5h3M732 135.5h8M226 136.5h5M271 136.5h4M378 136.5h2M591 136.5h2M643 136.5h3M740 136.5h6M275 137.5h3M375 137.5h3M593 137.5h2M637 137.5h6M746 137.5h5M278 138.5h4M373 138.5h2M595 138.5h2M628 138.5h9M751 138.5h4M282 139.5h22M362 139.5h11M597 139.5h31M755 139.5h4M304 140.5h21M345 140.5h17M759 140.5h3M325 141.5h20M762 141.5h3M765 142.5h4M769 143.5h3M772 144.5h5M777 145.5h6M783 146.5h4M787 147.5h4M791 148.5h4M795 149.5h4M799 150.5h3M802 151.5h4M806 152.5h4M810 153.5h4M814 154.5h3M817 155.5h2M819 156.5h3M822 157.5h3M825 158.5h2M827 159.5h3M830 160.5h2M832 161.5h2M835 163.5h2M839 166.5h2M843 169.5h2M847 172.5h2M851 175.5h2M854 177.5h2M856 178.5h2M859 180.5h2M862 182.5h2M865 184.5h2M867 185.5h2M870 187.5h2M872 188.5h2M874 189.5h2M876 190.5h2M878 191.5h2M880 192.5h2M882 193.5h2M884 194.5h2M886 195.5h2M888 196.5h2M890 197.5h2M892 198.5h3M895 199.5h2M897 200.5h2M899 201.5h2M901 202.5h3M904 203.5h2M906 204.5h2M908 205.5h3M911 206.5h2M913 207.5h2M915 208.5h2M917 209.5h3M920 210.5h2M922 211.5h2M924 212.5h2M926 213.5h3M929 214.5h3M932 215.5h4M936 216.5h3M939 217.5h3M942 218.5h3M945 219.5h4M949 220.5h3M952 221.5h2M954 222.5h2M956 223.5h2M958 224.5h2M960 225.5h2M962 226.5h2M964 227.5h2M966 228.5h2M968 229.5h2M971 231.5h2M974 233.5h2M977 235.5h2M979 236.5h2M982 238.5h2M985 240.5h2M988 242.5h2M991 244.5h2M993 245.5h2M995 246.5h2M997 247.5h2M999 248.5h2M1002 250.5h2M1004 251.5h2M1006 252.5h2M1008 253.5h2M1010 254.5h2M1012 255.5h2M1014 256.5h2M1016 257.5h3M1019 258.5h2M1021 259.5h2M1023 260.5h2M1025 261.5h3M1028 262.5h2M1030 263.5h2M1032 264.5h3M1035 265.5h2M1037 266.5h3M1040 267.5h2M1042 268.5h2M1044 269.5h3M1047 270.5h2M1049 271.5h3M1052 272.5h2M1054 273.5h3M1057 274.5h2M1059 275.5h2M1061 276.5h3M1064 277.5h2M1066 278.5h3M1069 279.5h2M1071 280.5h2M1073 281.5h2M1075 282.5h2M1077 283.5h2M1079 284.5h2M1081 285.5h2M1083 286.5h2M1085 287.5h2M1087 288.5h2M1089 289.5h2M1091 290.5h2M1094 292.5h2M1096 293.5h2M1098 294.5h2M1101 296.5h2M1103 297.5h2M1105 298.5h2M1108 300.5h2M1110 301.5h2M1112 302.5h2M1115 304.5h2M1119 307.5h2M1122 309.5h2M1125 311.5h2M1129 314.5h2M1132 316.5h2M1136 319.5h2M1138 320.5h2M1140 321.5h2M1142 322.5h2M1144 323.5h3M1147 324.5h2M1149 325.5h2M1151 326.5h2M167.5 118v1M834.5 162v1M837.5 164v1M838.5 165v1M841.5 167v1M842.5 168v1M845.5 170v1M846.5 171v1M849.5 173v1M850.5 174v1M853.5 176v1M858.5 179v1M861.5 181v1M864.5 183v1M869.5 186v1M970.5 230v1M973.5 232v1M976.5 234v1M981.5 237v1M984.5 239v1M987.5 241v1M990.5 243v1M1001.5 249v1M1093.5 291v1M1100.5 295v1M1107.5 299v1M1114.5 303v1M1117.5 305v1M1118.5 306v1M1121.5 308v1M1124.5 310v1M1127.5 312v1M1128.5 313v1M1131.5 315v1M1134.5 317v1M1135.5 318v1"/><path fill="none" stroke="#ff80ff" d="M34 87.5h2M36 88.5h2M38 89.5h2M40 90.5h2M42 91.5h2M44 92.5h2M46 93.5h2M48 94.5h2M50 95.5h2M52 96.5h2M54 97.5h6M60 98.5h10M70 99.5h7M77 100.5h2M79 101.5h2M81 102.5h2M83 103.5h2M85 104.5h2M87 105.5h2M89 106.5h2M91 107.5h2M93 108.5h2M95 109.5h2M97 110.5h2M99 111.5h2M101 112.5h2M103 113.5h2M105 114.5h2M107 115.5h2M109 116.5h2M111 117.5h2M113 118.5h2M115 119.5h2M117 120.5h2M119 121.5h2M121 122.5h2M420 123.5h6M467 123.5h3M124 124.5h2M414 124.5h6M426 124.5h6M465 124.5h2M470 124.5h5M126 125.5h2M408 125.5h6M432 125.5h5M443 125.5h22M475 125.5h4M491 125.5h10M666 125.5h17M128 126.5h2M402 126.5h6M437 126.5h6M479 126.5h12M501 126.5h3M662 126.5h4M683 126.5h4M130 127.5h2M396 127.5h6M504 127.5h3M660 127.5h2M687 127.5h4M132 128.5h2M390 128.5h6M507 128.5h3M658 128.5h2M691 128.5h7M134 129.5h2M385 129.5h5M510 129.5h2M656 129.5h2M698 129.5h8M136 130.5h2M383 130.5h2M512 130.5h2M654 130.5h2M706 130.5h11M138 131.5h4M170 131.5h20M380 131.5h3M514 131.5h2M652 131.5h2M717 131.5h8M142 132.5h7M157 132.5h13M190 132.5h12M378 132.5h2M516 132.5h2M650 132.5h2M725 132.5h3M149 133.5h8M202 133.5h3M376 133.5h2M518 133.5h2M648 133.5h2M728 133.5h4M205 134.5h2M373 134.5h3M520 134.5h2M646 134.5h2M732 134.5h3M207 135.5h3M371 135.5h2M522 135.5h2M641 135.5h5M735 135.5h4M210 136.5h4M368 136.5h3M524 136.5h2M581 136.5h3M633 136.5h8M739 136.5h4M214 137.5h5M366 137.5h2M526 137.5h2M579 137.5h2M584 137.5h6M625 137.5h8M743 137.5h4M219 138.5h5M256 138.5h16M363 138.5h3M528 138.5h2M577 138.5h2M590 138.5h12M615 138.5h10M747 138.5h3M224 139.5h13M250 139.5h6M272 139.5h8M360 139.5h3M530 139.5h6M570 139.5h7M602 139.5h13M750 139.5h3M237 140.5h13M280 140.5h13M356 140.5h4M536 140.5h10M557 140.5h13M753 140.5h3M293 141.5h11M353 141.5h3M546 141.5h11M756 141.5h3M304 142.5h6M345 142.5h8M759 142.5h3M310 143.5h9M331 143.5h14M762 143.5h2M319 144.5h12M764 144.5h2M766 145.5h2M768 146.5h2M770 147.5h2M772 148.5h2M774 149.5h2M776 150.5h2M778 151.5h2M781 153.5h2M783 154.5h2M786 156.5h2M790 159.5h2M793 161.5h2M797 164.5h2M804 170.5h2M806 171.5h2M808 172.5h2M810 173.5h2M812 174.5h2M814 175.5h2M816 176.5h2M818 177.5h2M820 178.5h2M822 179.5h2M824 180.5h2M826 181.5h2M828 182.5h2M830 183.5h2M832 184.5h2M834 185.5h2M836 186.5h2M838 187.5h2M840 188.5h2M844 191.5h2M848 194.5h2M851 196.5h2M853 197.5h2M855 198.5h2M857 199.5h2M859 200.5h2M861 201.5h2M863 202.5h2M865 203.5h3M868 204.5h2M870 205.5h3M873 206.5h2M875 207.5h3M878 208.5h3M881 209.5h3M884 210.5h2M886 211.5h3M889 212.5h3M892 213.5h2M894 214.5h2M896 215.5h2M898 216.5h2M900 217.5h2M902 218.5h3M905 219.5h2M907 220.5h3M910 221.5h2M912 222.5h3M915 223.5h2M917 224.5h2M919 225.5h2M921 226.5h2M923 227.5h2M925 228.5h2M927 229.5h3M930 230.5h3M933 231.5h3M936 232.5h3M939 233.5h4M943 234.5h4M947 235.5h3M950 236.5h2M952 237.5h2M954 238.5h2M956 239.5h2M958 240.5h2M960 241.5h2M962 242.5h2M964 243.5h2M967 245.5h2M969 246.5h2M971 247.5h2M973 248.5h2M975 249.5h2M977 250.5h2M979 251.5h2M981 252.5h2M983 253.5h2M985 254.5h2M987 255.5h2M989 256.5h2M991 257.5h2M993 258.5h2M995 259.5h2M997 260.5h2M999 261.5h2M1002 263.5h2M1004 264.5h2M1007 266.5h2M1009 267.5h2M1011 268.5h2M1014 270.5h2M1016 271.5h2M1018 272.5h2M1020 273.5h2M1022 274.5h2M1024 275.5h3M1027 276.5h2M1029 277.5h2M1031 278.5h2M1033 279.5h3M1036 280.5h2M1038 281.5h2M1040 282.5h2M1042 283.5h2M1044 284.5h2M1046 285.5h2M1049 287.5h2M1051 288.5h2M1053 289.5h2M1055 290.5h2M1057 291.5h2M1059 292.5h2M1063 295.5h2M1068 299.5h2M1075 305.5h2M1081 310.5h2M1085 313.5h2M1089 316.5h2M1092 318.5h2M1095 320.5h2M1099 323.5h2M1102 325.5h2M1104 326.5h11M1115 327.5h2M1117 328.5h2M1119 329.5h2M1121 330.5h2M1123 331.5h2M1125 332.5h3M1128 333.5h2M1130 334.5h3M1133 335.5h2M1135 336.5h2M1137 337.5h2M1139 338.5h2M1141 339.5h2M1143 340.5h2M1145 341.5h9M123.5 123v1M780.5 152v1M785.5 155v1M788.5 157v1M789.5 158v1M792.5 160v1M795.5 162v1M796.5 163v1M799.5 165v1M800.5 166v1M801.5 167v1M802.5 168v1M803.5 169v1M842.5 189v1M843.5 190v1M846.5 192v1M847.5 193v1M850.5 195v1M966.5 244v1M1001.5 262v1M1006.5 265v1M1013.5 269v1M1048.5 286v1M1061.5 293v1M1062.5 294v1M1065.5 296v1M1066.5 297v1M1067.5 298v1M1070.5 300v1M1071.5 301v1M1072.5 302v1M1073.5 303v1M1074.5 304v1M1077.5 306v1M1078.5 307v1M1079.5 308v1M1080.5 309v1M1083.5 311v1M1084.5 312v1M1087.5 314v1M1088.5 315v1M1091.5 317v1M1094.5 319v1M1097.5 321v1M1098.5 322v1M1101.5 324v1"/><path fill="none" stroke="#ffff00" d="M401 107.5h9M395 108.5h6M410 108.5h10M391 109.5h4M420 109.5h7M427 110.5h2M429 111.5h2M676 111.5h4M45 112.5h2M431 112.5h2M673 112.5h3M680 112.5h4M433 113.5h2M668 113.5h5M684 113.5h2M385 114.5h2M663 114.5h5M686 114.5h2M688 115.5h2M691 117.5h2M693 118.5h2M695 119.5h2M697 120.5h2M55 121.5h2M699 121.5h2M654 122.5h2M701 122.5h2M652 123.5h2M704 124.5h2M60 125.5h3M113 125.5h7M649 125.5h2M706 125.5h2M63 126.5h4M102 126.5h11M120 126.5h2M647 126.5h2M67 127.5h12M93 127.5h9M122 127.5h2M709 127.5h2M79 128.5h14M124 128.5h2M644 128.5h2M126 129.5h2M642 129.5h2M128 130.5h2M130 131.5h2M639 131.5h2M714 131.5h2M132 132.5h2M637 132.5h2M134 133.5h2M199 133.5h3M635 133.5h2M136 134.5h2M195 134.5h4M202 134.5h4M633 134.5h2M138 135.5h4M191 135.5h4M206 135.5h4M365 135.5h2M631 135.5h2M142 136.5h7M156 136.5h10M187 136.5h4M210 136.5h3M361 136.5h4M627 136.5h4M149 137.5h7M166 137.5h21M213 137.5h3M357 137.5h4M579 137.5h10M623 137.5h4M216 138.5h4M353 138.5h4M459 138.5h2M505 138.5h51M577 138.5h2M589 138.5h16M617 138.5h6M220 139.5h3M350 139.5h3M461 139.5h3M501 139.5h4M556 139.5h21M605 139.5h12M223 140.5h3M347 140.5h3M464 140.5h2M497 140.5h4M226 141.5h2M255 141.5h8M344 141.5h3M466 141.5h4M493 141.5h4M228 142.5h2M249 142.5h6M263 142.5h7M308 142.5h4M340 142.5h4M470 142.5h4M489 142.5h4M230 143.5h19M270 143.5h4M302 143.5h6M312 143.5h4M337 143.5h3M474 143.5h4M483 143.5h6M274 144.5h3M284 144.5h18M316 144.5h3M333 144.5h4M478 144.5h5M277 145.5h7M319 145.5h4M327 145.5h6M323 146.5h4M734 155.5h2M738 158.5h2M742 161.5h2M746 164.5h2M748 165.5h2M750 166.5h3M753 167.5h3M756 168.5h3M759 169.5h3M762 170.5h2M764 171.5h2M766 172.5h2M768 173.5h2M770 174.5h2M772 175.5h3M775 176.5h2M777 177.5h2M779 178.5h2M781 179.5h6M787 180.5h5M792 181.5h2M795 183.5h2M797 184.5h3M800 185.5h4M804 186.5h5M809 187.5h6M815 188.5h3M818 189.5h2M820 190.5h2M822 191.5h2M825 193.5h2M829 196.5h2M840 206.5h2M844 209.5h2M849 213.5h2M855 218.5h2M857 219.5h2M859 220.5h2M861 221.5h2M863 222.5h2M865 223.5h2M867 224.5h2M869 225.5h2M871 226.5h2M874 228.5h2M876 229.5h2M878 230.5h2M880 231.5h2M882 232.5h4M886 233.5h6M892 234.5h5M897 235.5h4M901 236.5h7M908 237.5h10M918 238.5h9M927 239.5h8M935 240.5h14M951 243.5h2M955 246.5h2M957 247.5h2M959 248.5h2M961 249.5h2M963 250.5h2M981 269.5h2M987 274.5h2M993 279.5h2M999 284.5h2M1018 302.5h2M1021 304.5h3M1038 304.5h12M1024 305.5h4M1033 305.5h5M1050 305.5h2M1028 306.5h5M1052 306.5h2M1054 307.5h2M1057 309.5h2M1059 310.5h2M1062 312.5h2M1065 314.5h2M1068 316.5h2M1071 318.5h2M1073 319.5h2M1076 321.5h2M1079 323.5h2M1084 327.5h2M1091 333.5h2M1100 341.5h2M1107 347.5h2M1110 349.5h2M1113 351.5h2M1116 353.5h2M1118 354.5h2M1120 355.5h2M1122 356.5h2M1124 357.5h2M1126 358.5h2M1128 359.5h2M1146 359.5h5M1130 360.5h16M26.5 91v1M27.5 92v1M28.5 93v1M29.5 94v1M30.5 95v2M31.5 97v1M32.5 98v1M33.5 99v1M34.5 100v1M35.5 101v1M36.5 102v1M37.5 103v2M38.5 105v1M39.5 106v1M40.5 107v1M41.5 108v1M42.5 109v1M43.5 110v1M44.5 111v1M47.5 113v1M48.5 114v1M49.5 115v1M50.5 116v1M51.5 117v1M52.5 118v1M53.5 119v1M54.5 120v1M57.5 122v1M58.5 123v1M59.5 124v1M367.5 134v1M368.5 133v1M369.5 132v1M370.5 131v1M371.5 130v1M372.5 129v1M373.5 128v1M374.5 127v1M375.5 125v2M376.5 124v1M377.5 123v1M378.5 122v1M379.5 120v2M380.5 119v1M381.5 118v1M382.5 117v1M383.5 116v1M384.5 115v1M387.5 113v1M388.5 112v1M389.5 111v1M390.5 110v1M435.5 114v1M436.5 115v1M437.5 116v1M438.5 117v1M439.5 118v1M440.5 119v1M441.5 120v1M442.5 121v1M443.5 122v1M444.5 123v1M445.5 124v1M446.5 125v1M447.5 126v1M448.5 127v1M449.5 128v1M450.5 129v1M451.5 130v1M452.5 131v1M453.5 132v1M454.5 133v1M455.5 134v1M456.5 135v1M457.5 136v1M458.5 137v1M641.5 130v1M646.5 127v1M651.5 124v1M656.5 121v1M657.5 120v1M658.5 119v1M659.5 118v1M660.5 117v1M661.5 116v1M662.5 115v1M690.5 116v1M703.5 123v1M708.5 126v1M711.5 128v1M712.5 129v1M713.5 130v1M716.5 132v1M717.5 133v1M718.5 134v1M719.5 135v1M720.5 136v1M721.5 137v1M722.5 138v2M723.5 140v1M724.5 141v1M725.5 142v1M726.5 143v1M727.5 144v2M728.5 146v1M729.5 147v2M730.5 149v2M731.5 151v1M732.5 152v2M733.5 154v1M736.5 156v1M737.5 157v1M740.5 159v1M741.5 160v1M744.5 162v1M745.5 163v1M794.5 182v1M824.5 192v1M827.5 194v1M828.5 195v1M831.5 197v1M832.5 198v1M833.5 199v1M834.5 200v1M835.5 201v1M836.5 202v1M837.5 203v1M838.5 204v1M839.5 205v1M842.5 207v1M843.5 208v1M846.5 210v1M847.5 211v1M848.5 212v1M851.5 214v1M852.5 215v1M853.5 216v1M854.5 217v1M873.5 227v1M949.5 241v1M950.5 242v1M953.5 244v1M954.5 245v1M965.5 251v2M966.5 253v1M967.5 254v1M968.5 255v2M969.5 257v1M970.5 258v1M971.5 259v1M972.5 260v1M973.5 261v1M974.5 262v1M975.5 263v1M976.5 264v1M977.5 265v1M978.5 266v1M979.5 267v1M980.5 268v1M983.5 270v1M984.5 271v1M985.5 272v1M986.5 273v1M989.5 275v1M990.5 276v1M991.5 277v1M992.5 278v1M995.5 280v1M996.5 281v1M997.5 282v1M998.5 283v1M1001.5 285v1M1002.5 286v1M1003.5 287v1M1004.5 288v1M1005.5 289v1M1006.5 290v1M1007.5 291v1M1008.5 292v1M1009.5 293v1M1010.5 294v1M1011.5 295v1M1012.5 296v1M1013.5 297v1M1014.5 298v1M1015.5 299v1M1016.5 300v1M1017.5 301v1M1020.5 303v1M1056.5 308v1M1061.5 311v1M1064.5 313v1M1067.5 315v1M1070.5 317v1M1075.5 320v1M1078.5 322v1M1081.5 324v1M1082.5 325v1M1083.5 326v1M1086.5 328v1M1087.5 329v1M1088.5 330v1M1089.5 331v1M1090.5 332v1M1093.5 334v1M1094.5 335v1M1095.5 336v1M1096.5 337v1M1097.5 338v1M1098.5 339v1M1099.5 340v1M1102.5 342v1M1103.5 343v1M1104.5 344v1M1105.5 345v1M1106.5 346v1M1109.5 348v1M1112.5 350v1M1115.5 352v1"/><path fill="none" stroke="#ffffff" d="M390 89.5h4M394 90.5h7M401 91.5h4M663 95.5h2M665 96.5h2M667 97.5h2M669 98.5h2M648 112.5h2M646 113.5h2M644 114.5h2M79 116.5h8M77 117.5h2M75 118.5h2M73 119.5h2M71 120.5h2M94 124.5h2M366 124.5h2M364 125.5h2M97 126.5h2M362 126.5h2M360 127.5h2M100 128.5h2M358 128.5h2M356 129.5h2M103 130.5h2M494 131.5h9M106 132.5h2M181 132.5h6M265 132.5h2M352 132.5h2M492 132.5h2M503 132.5h2M35 133.5h2M108 133.5h13M175 133.5h6M187 133.5h4M198 133.5h6M267 133.5h2M490 133.5h2M505 133.5h2M564 133.5h3M37 134.5h2M121 134.5h4M169 134.5h6M191 134.5h7M204 134.5h4M269 134.5h2M488 134.5h2M507 134.5h2M560 134.5h4M567 134.5h4M627 134.5h2M39 135.5h2M125 135.5h4M163 135.5h6M208 135.5h2M346 135.5h4M486 135.5h2M509 135.5h2M558 135.5h2M571 135.5h3M625 135.5h2M129 136.5h3M159 136.5h4M272 136.5h2M341 136.5h5M484 136.5h2M511 136.5h4M556 136.5h2M574 136.5h4M584 136.5h4M623 136.5h2M42 137.5h2M132 137.5h2M274 137.5h2M482 137.5h2M515 137.5h2M554 137.5h2M578 137.5h6M588 137.5h2M621 137.5h2M44 138.5h2M134 138.5h2M212 138.5h2M276 138.5h2M552 138.5h2M590 138.5h2M46 139.5h2M136 139.5h2M142 139.5h5M155 139.5h2M278 139.5h2M479 139.5h2M550 139.5h2M592 139.5h2M48 140.5h7M138 140.5h4M147 140.5h2M280 140.5h2M477 140.5h2M519 140.5h2M548 140.5h2M594 140.5h2M617 140.5h2M149 141.5h2M216 141.5h2M282 141.5h2M475 141.5h2M546 141.5h2M596 141.5h2M151 142.5h2M218 142.5h2M284 142.5h2M544 142.5h2M598 142.5h3M613 142.5h3M220 143.5h2M286 143.5h2M472 143.5h2M523 143.5h2M542 143.5h2M601 143.5h2M607 143.5h6M288 144.5h2M332 144.5h2M525 144.5h3M603 144.5h4M290 145.5h2M311 145.5h5M469 145.5h2M528 145.5h2M699 145.5h2M292 146.5h4M308 146.5h3M316 146.5h8M329 146.5h2M530 146.5h5M538 146.5h2M701 146.5h2M296 147.5h12M324 147.5h5M442 147.5h2M466 147.5h2M535 147.5h3M703 147.5h2M444 148.5h2M446 149.5h4M463 149.5h2M706 149.5h2M450 150.5h13M229 152.5h15M710 152.5h2M712 153.5h2M714 154.5h4M718 155.5h4M722 156.5h2M724 157.5h2M728 160.5h2M731 162.5h2M735 165.5h2M782 179.5h8M780 180.5h2M790 180.5h2M778 181.5h2M752 182.5h5M776 182.5h2M757 183.5h19M794 183.5h2M796 184.5h2M798 185.5h4M802 186.5h2M804 187.5h2M806 188.5h2M809 190.5h2M826 207.5h2M829 209.5h2M841 224.5h2M891 232.5h4M882 233.5h9M895 233.5h2M872 234.5h10M852 235.5h3M866 235.5h6M898 235.5h2M855 236.5h4M862 236.5h4M900 236.5h5M859 237.5h3M905 237.5h5M910 238.5h2M912 239.5h2M914 240.5h3M917 241.5h2M919 242.5h2M945 242.5h2M921 243.5h3M941 243.5h4M947 243.5h2M924 244.5h4M934 244.5h7M928 245.5h6M950 245.5h2M959 253.5h2M961 254.5h2M963 255.5h2M986 301.5h2M988 302.5h2M990 303.5h2M1038 303.5h11M1006 304.5h2M1027 304.5h11M1008 305.5h2M1025 305.5h2M1010 306.5h2M1023 306.5h2M1051 306.5h2M995 307.5h2M1002 307.5h2M1012 307.5h11M1091 355.5h2M1095 358.5h2M1097 359.5h4M1112 359.5h9M1101 360.5h11M1121 360.5h4M1149 360.5h2M1125 361.5h5M1137 361.5h12M1130 362.5h7M26.5 119v1M27.5 120v2M28.5 122v2M29.5 124v1M30.5 125v2M31.5 127v1M32.5 128v2M33.5 130v2M34.5 132v1M41.5 136v1M55.5 139v1M56.5 138v1M57.5 136v2M58.5 135v1M59.5 134v1M60.5 133v1M61.5 132v1M62.5 130v2M63.5 129v1M64.5 128v1M65.5 127v1M66.5 126v1M67.5 125v1M68.5 123v2M69.5 122v1M70.5 121v1M87.5 117v1M88.5 118v1M89.5 119v1M90.5 120v1M91.5 121v1M92.5 122v1M93.5 123v1M96.5 125v1M99.5 127v1M102.5 129v1M105.5 131v1M153.5 141v1M154.5 140v1M157.5 138v1M158.5 137v1M210.5 136v1M211.5 137v1M214.5 139v1M215.5 140v1M222.5 144v1M223.5 145v1M224.5 146v1M225.5 147v2M226.5 149v1M227.5 150v1M228.5 151v1M244.5 151v1M245.5 150v1M246.5 149v1M247.5 148v1M248.5 147v1M249.5 146v1M250.5 145v1M251.5 144v1M252.5 143v1M253.5 142v1M254.5 141v1M255.5 140v1M256.5 139v1M257.5 138v1M258.5 137v1M259.5 136v1M260.5 135v1M261.5 134v1M262.5 133v1M263.5 132v1M264.5 131v1M271.5 135v1M331.5 145v1M334.5 143v1M335.5 142v1M336.5 141v1M337.5 140v1M338.5 139v1M339.5 138v1M340.5 137v1M350.5 134v1M351.5 133v1M354.5 131v1M355.5 130v1M368.5 123v1M369.5 122v1M370.5 120v2M371.5 119v1M372.5 118v1M373.5 117v1M374.5 115v2M375.5 114v1M376.5 113v1M377.5 111v2M378.5 109v2M379.5 107v2M380.5 105v2M381.5 103v2M382.5 101v2M383.5 100v1M384.5 98v2M385.5 97v1M386.5 95v2M387.5 93v2M388.5 92v1M389.5 90v2M405.5 92v2M406.5 94v1M407.5 95v2M408.5 97v2M409.5 99v1M410.5 100v2M411.5 102v1M412.5 103v2M413.5 105v1M414.5 106v2M415.5 108v2M416.5 110v1M417.5 111v2M418.5 113v2M419.5 115v2M420.5 117v1M421.5 118v2M422.5 120v2M423.5 122v1M424.5 123v2M425.5 125v1M426.5 126v2M427.5 128v1M428.5 129v1M429.5 130v2M430.5 132v1M431.5 133v1M432.5 134v2M433.5 136v1M434.5 137v1M435.5 138v1M436.5 139v2M437.5 141v1M438.5 142v1M439.5 143v2M440.5 145v1M441.5 146v1M465.5 148v1M468.5 146v1M471.5 144v1M474.5 142v1M481.5 138v1M517.5 138v1M518.5 139v1M521.5 141v1M522.5 142v1M540.5 145v1M541.5 144v1M616.5 141v1M619.5 139v1M620.5 138v1M629.5 133v1M630.5 132v1M631.5 130v2M632.5 129v1M633.5 128v1M634.5 126v2M635.5 125v1M636.5 124v1M637.5 123v1M638.5 121v2M639.5 120v1M640.5 119v1M641.5 118v1M642.5 116v2M643.5 115v1M650.5 111v1M651.5 110v1M652.5 108v2M653.5 107v1M654.5 106v1M655.5 105v1M656.5 103v2M657.5 102v1M658.5 101v1M659.5 100v1M660.5 99v1M661.5 97v2M662.5 96v1M671.5 99v1M672.5 100v1M673.5 101v1M674.5 102v2M675.5 104v1M676.5 105v1M677.5 106v1M678.5 107v1M679.5 108v2M680.5 110v1M681.5 111v2M682.5 113v1M683.5 114v2M684.5 116v2M685.5 118v2M686.5 120v2M687.5 122v2M688.5 124v2M689.5 126v2M690.5 128v1M691.5 129v2M692.5 131v2M693.5 133v2M694.5 135v2M695.5 137v2M696.5 139v2M697.5 141v2M698.5 143v2M705.5 148v1M708.5 150v1M709.5 151v1M726.5 158v1M727.5 159v1M730.5 161v1M733.5 163v1M734.5 164v1M737.5 166v1M738.5 167v1M739.5 168v1M740.5 169v1M741.5 170v1M742.5 171v2M743.5 173v1M744.5 174v1M745.5 175v1M746.5 176v1M747.5 177v1M748.5 178v1M749.5 179v1M750.5 180v1M751.5 181v1M792.5 181v1M793.5 182v1M808.5 189v1M811.5 191v1M812.5 192v1M813.5 193v1M814.5 194v2M815.5 196v1M816.5 197v1M817.5 198v1M818.5 199v1M819.5 200v1M820.5 201v1M821.5 202v1M822.5 203v1M823.5 204v1M824.5 205v1M825.5 206v1M828.5 208v1M831.5 210v1M832.5 211v2M833.5 213v1M834.5 214v2M835.5 216v2M836.5 218v1M837.5 219v2M838.5 221v1M839.5 222v1M840.5 223v1M843.5 225v1M844.5 226v1M845.5 227v1M846.5 228v1M847.5 229v1M848.5 230v2M849.5 232v1M850.5 233v1M851.5 234v1M897.5 234v1M949.5 244v1M952.5 246v1M953.5 247v1M954.5 248v1M955.5 249v1M956.5 250v1M957.5 251v1M958.5 252v1M965.5 256v2M966.5 258v4M967.5 262v3M968.5 265v3M969.5 268v3M970.5 271v3M971.5 274v2M972.5 276v3M973.5 279v3M974.5 282v2M975.5 284v2M976.5 286v2M977.5 288v2M978.5 290v2M979.5 292v1M980.5 293v2M981.5 295v1M982.5 296v1M983.5 297v2M984.5 299v1M985.5 300v1M992.5 304v1M993.5 305v1M994.5 306v1M997.5 308v1M998.5 309v1M999.5 310v1M1000.5 309v1M1001.5 308v1M1004.5 306v1M1005.5 305v1M1049.5 304v1M1050.5 305v1M1053.5 307v1M1054.5 308v1M1055.5 309v1M1056.5 310v1M1057.5 311v1M1058.5 312v1M1059.5 313v2M1060.5 315v1M1061.5 316v1M1062.5 317v1M1063.5 318v1M1064.5 319v2M1065.5 321v2M1066.5 323v1M1067.5 324v2M1068.5 326v2M1069.5 328v1M1070.5 329v2M1071.5 331v2M1072.5 333v1M1073.5 334v2M1074.5 336v2M1075.5 338v1M1076.5 339v1M1077.5 340v1M1078.5 341v1M1079.5 342v1M1080.5 343v1M1081.5 344v1M1082.5 345v1M1083.5 346v1M1084.5 347v1M1085.5 348v1M1086.5 349v2M1087.5 351v1M1088.5 352v1M1089.5 353v1M1090.5 354v1M1093.5 356v1M1094.5 357v1M1151.5 359v1"/><text x="25.6" y="72.3" font-size="12.8" fill="#fff" stroke="#fff">19.1%(17.300)</text><text x="25.6" y="112.3" font-size="12.8" fill="#fff" stroke="#fff">38.2%(16.890)</text><text x="25.6" y="135.3" font-size="12.8" fill="#fff" stroke="#fff">50.0%(16.640)</text><text x="25.6" y="159.3" font-size="12.8" fill="#fff" stroke="#fff">61.8%(16.389)</text><text x="25.6" y="237.3" font-size="12.8" fill="#fff" stroke="#fff">100.0%(15.569)</text><text x="25.6" y="276.3" font-size="12.8" fill="#fff" stroke="#fff">119.1%(15.167)</text><text x="25.6" y="315.3" font-size="12.8" fill="#fff" stroke="#fff">138.2%(14.757)</text><text x="25.6" y="339.3" font-size="12.8" fill="#fff" stroke="#fff">150.0%(14.506)</text><text x="25.6" y="363.3" font-size="12.8" fill="#fff" stroke="#fff">161.8%(14.256)</text><text x="22.5" y="34.06" font-size="12" fill="#e0e0e0" stroke="#e0e0e0">日线</text><text x="54.5" y="34.06" font-size="12" fill="#e0e0e0" stroke="#e0e0e0">伦敦银</text><text x="94" y="33" font-size="12" fill="#fff" stroke="#fff">MA5: 14.136</text><path d="M164 25h1v1h1v1h1v1h-2v8h-1v-8h-2v-1h1v-1h1z" fill="#e62a2a"/><text x="171.5" y="33" font-size="12" fill="#ffff00" stroke="#ffff00">MA10: 14.142</text><path d="M248 25h1v1h1v1h1v1h-2v8h-1v-8h-2v-1h1v-1h1z" fill="#e62a2a"/><text x="255.5" y="33" font-size="12" fill="#ff80ff" stroke="#ff80ff">MA20: 14.373</text><path d="M332 25h1v8h-1z" fill="#54ffff" fill-opacity=".62"/><path d="M330 33h5v1h-1v1h-1v1h-1v-1h-1v-1h-1z" fill="#54ffff"/><text x="340" y="33" font-size="12" fill="#00e600" stroke="#00e600">MA30: 14.565</text><path d="M416 25h1v8h-1z" fill="#54ffff" fill-opacity=".62"/><path d="M414 33h5v1h-1v1h-1v1h-1v-1h-1v-1h-1z" fill="#54ffff"/><text x="424" y="33" font-size="12" fill="#02e2f4" stroke="#02e2f4">MA60: 15.124</text><path d="M500 25h1v8h-1z" fill="#54ffff" fill-opacity=".62"/><path d="M498 33h5v1h-1v1h-1v1h-1v-1h-1v-1h-1z" fill="#54ffff"/><path d="M1065.5 20V39.5H1176M1107.5 20V39M1138.5 20V39M1157.5 20V39" stroke="#8c0000" fill="none"/><text x="1067.5" y="34.06" font-size="12" fill="#e0e0e0" stroke="#e0e0e0">加自选</text><text x="1109.5" y="34.06" font-size="12" fill="#e0e0e0" stroke="#e0e0e0">均线</text><text x="1141.5" y="34.06" font-size="12" fill="#e0e0e0" stroke="#e0e0e0">窗</text><path d="M1161 27.5h5v-3.5l5.5 5.5-5.5 5.5v-3.5h-5zM1171.5 24h2v11h-2z" fill="#d0d0d0"/><text x="1178.3" y="43.8" font-size="12" fill="#ff3232" stroke="#ff3232">17.526</text><text x="1178.3" y="115.8" font-size="12" fill="#ff3232" stroke="#ff3232">16.770</text><text x="1178.3" y="188.8" font-size="12" fill="#ff3232" stroke="#ff3232">16.004</text><text x="1178.3" y="261.8" font-size="12" fill="#ff3232" stroke="#ff3232">15.238</text><text x="1178.3" y="334.8" font-size="12" fill="#ff3232" stroke="#ff3232">14.471</text><text x="1178.3" y="428.8" font-size="12" fill="#ff3232" stroke="#ff3232">+111.1</text><text x="1178.3" y="450.8" font-size="12" fill="#ff3232" stroke="#ff3232">+90.36</text><text x="1178.3" y="472.8" font-size="12" fill="#ff3232" stroke="#ff3232">+69.63</text><text x="1178.3" y="494.8" font-size="12" fill="#ff3232" stroke="#ff3232">+48.90</text><text x="1178.3" y="516.8" font-size="12" fill="#ff3232" stroke="#ff3232">+28.17</text><text x="1178.3" y="539.8" font-size="12" fill="#ff3232" stroke="#ff3232">+7.44</text><text x="1178.3" y="582.8" font-size="12" fill="#c8c8c8" stroke="#c8c8c8">0.446</text><text x="1178.3" y="603.8" font-size="12" fill="#c8c8c8" stroke="#c8c8c8">0.268</text><text x="1178.3" y="625.8" font-size="12" fill="#c8c8c8" stroke="#c8c8c8">0.082</text><text x="1177" y="647.8" font-size="12" fill="#c8c8c8" stroke="#c8c8c8">-0.104</text><text x="1177" y="668.8" font-size="12" fill="#c8c8c8" stroke="#c8c8c8">-0.282</text><text x="1177" y="690.8" font-size="12" fill="#c8c8c8" stroke="#c8c8c8">-0.468</text><text x="1177" y="712.8" font-size="12" fill="#c8c8c8" stroke="#c8c8c8">-0.655</text><path d="M383.5 56.5H396M387 54l-3.5 2.5 3.5 2.5" stroke="#c8c8c8" fill="none"/><text x="398" y="60.5" font-size="12" fill="#c0c0c0" stroke="#c0c0c0">17.335</text><path d="M1104.5 384.5H1117M1108 382l-3.5 2.5 3.5 2.5" stroke="#c8c8c8" fill="none"/><text x="1119" y="389" font-size="12" fill="#c0c0c0" stroke="#c0c0c0">13.896</text><ellipse cx="1110.3" cy="354.1" rx="69" ry="26.1" fill="none" stroke="#bc2a2a" stroke-width="1.25" shape-rendering="geometricPrecision"/><path d="M1145.9 374.1 L1155.5 343.1 L1166.9 335 L1166.9 353 L1162.5 352.3Z" fill="#f83c3c" shape-rendering="geometricPrecision"/><path fill="none" stroke="#ffff80" d="M662 452.5h2M383 453.5h2M658 453.5h4M381 454.5h2M385 454.5h2M656 454.5h2M379 455.5h2M387 455.5h2M654 455.5h2M377 456.5h2M389 456.5h2M652 456.5h2M650 457.5h2M648 458.5h2M646 459.5h2M644 460.5h2M488 461.5h4M642 461.5h2M492 462.5h4M498 465.5h2M340 469.5h2M263 470.5h2M338 470.5h2M259 471.5h4M336 471.5h2M257 472.5h2M334 472.5h2M558 477.5h4M348 478.5h8M562 478.5h7M159 479.5h3M569 479.5h4M193 480.5h2M191 481.5h2M195 481.5h2M624 481.5h2M1034 481.5h8M79 482.5h4M164 482.5h2M189 482.5h2M1032 482.5h2M68 483.5h11M166 483.5h2M184 483.5h5M293 483.5h2M1030 483.5h2M168 484.5h4M177 484.5h7M199 484.5h2M295 484.5h2M1028 484.5h2M85 485.5h2M172 485.5h5M297 485.5h2M585 487.5h2M89 488.5h2M581 488.5h4M587 488.5h2M91 489.5h4M579 489.5h2M787 489.5h3M95 490.5h3M544 490.5h4M785 490.5h2M98 491.5h4M548 491.5h4M591 491.5h2M783 491.5h2M102 492.5h2M278 493.5h4M540 493.5h2M151 494.5h2M282 494.5h4M516 494.5h2M147 495.5h4M518 495.5h2M145 496.5h2M319 496.5h2M520 496.5h2M536 496.5h2M143 497.5h2M315 497.5h4M522 497.5h3M534 497.5h2M941 497.5h2M310 498.5h5M525 498.5h4M532 498.5h2M306 499.5h4M529 499.5h3M116 500.5h2M139 500.5h2M878 500.5h2M937 500.5h2M114 501.5h2M241 501.5h2M802 501.5h2M866 501.5h2M876 501.5h2M112 502.5h2M239 502.5h2M773 502.5h2M798 502.5h4M804 502.5h2M868 502.5h4M874 502.5h2M914 502.5h2M934 502.5h2M110 503.5h2M120 503.5h2M237 503.5h2M771 503.5h2M796 503.5h2M872 503.5h2M910 503.5h4M601 504.5h2M612 504.5h2M769 504.5h2M908 504.5h2M808 505.5h2M930 505.5h2M1003 505.5h4M1056 505.5h2M1130 505.5h2M124 506.5h2M766 506.5h2M928 506.5h2M998 506.5h5M1116 506.5h2M1119 506.5h2M126 507.5h2M605 507.5h2M608 507.5h2M764 507.5h2M811 507.5h2M926 507.5h2M996 507.5h2M1121 507.5h2M128 508.5h2M762 508.5h2M813 508.5h2M924 508.5h2M994 508.5h2M1009 508.5h2M1060 508.5h2M1123 508.5h2M1126 508.5h2M130 509.5h2M215 509.5h2M815 509.5h2M922 509.5h2M992 509.5h2M1112 509.5h2M217 510.5h4M990 510.5h2M1063 510.5h2M221 511.5h2M988 511.5h2M1065 511.5h2M757 512.5h2M857 512.5h2M986 512.5h2M1067 512.5h2M1069 513.5h2M691 514.5h2M1071 514.5h4M693 515.5h4M702 515.5h5M853 515.5h2M1075 515.5h3M697 516.5h5M707 516.5h4M845 516.5h8M1078 516.5h4M228 517.5h2M711 517.5h3M958 517.5h2M1082 517.5h5M1101 517.5h4M426 518.5h2M714 518.5h2M1087 518.5h14M46 519.5h2M428 519.5h2M716 519.5h2M824 519.5h4M841 519.5h2M26 520.5h2M44 520.5h2M430 520.5h2M718 520.5h2M740 520.5h2M828 520.5h5M962 520.5h2M28 521.5h4M42 521.5h2M432 521.5h2M445 521.5h2M720 521.5h2M738 521.5h2M742 521.5h2M833 521.5h4M976 521.5h2M32 522.5h10M434 522.5h2M443 522.5h2M722 522.5h2M744 522.5h2M837 522.5h2M965 522.5h2M436 523.5h2M441 523.5h2M724 523.5h2M746 523.5h2M967 523.5h2M438 524.5h3M726 524.5h4M734 524.5h2M969 524.5h2M972 524.5h2M730 525.5h4M48.5 518v1M49.5 517v1M50.5 516v1M51.5 515v1M52.5 514v1M53.5 513v1M54.5 512v1M55.5 510v2M56.5 508v2M57.5 506v2M58.5 504v2M59.5 502v2M60.5 500v2M61.5 498v2M62.5 496v2M63.5 494v2M64.5 491v3M65.5 489v2M66.5 487v2M67.5 485v2M68.5 484v1M83.5 483v1M84.5 484v1M87.5 486v1M88.5 487v1M104.5 493v2M105.5 495v1M106.5 496v2M107.5 498v2M108.5 500v1M109.5 501v2M118.5 501v1M119.5 502v1M122.5 504v1M123.5 505v1M132.5 508v1M133.5 507v1M134.5 505v2M135.5 504v1M136.5 503v1M137.5 502v1M138.5 501v1M141.5 499v1M142.5 498v1M152.5 493v1M153.5 491v2M154.5 489v2M155.5 486v3M156.5 484v2M157.5 482v2M158.5 480v2M159.5 478v1M162.5 480v1M163.5 481v1M197.5 482v1M198.5 483v1M201.5 485v1M202.5 486v2M203.5 488v2M204.5 490v2M205.5 492v2M206.5 494v2M207.5 496v2M208.5 498v1M209.5 499v2M210.5 501v1M211.5 502v2M212.5 504v2M213.5 506v1M214.5 507v2M223.5 512v1M224.5 513v1M225.5 514v1M226.5 515v1M227.5 516v1M229.5 518v1M230.5 515v2M231.5 513v2M232.5 511v2M233.5 509v2M234.5 507v2M235.5 505v2M236.5 504v1M243.5 500v1M244.5 499v1M245.5 497v2M246.5 496v1M247.5 495v1M248.5 493v2M249.5 492v1M250.5 490v2M251.5 487v3M252.5 485v2M253.5 482v3M254.5 479v3M255.5 477v2M256.5 474v3M257.5 473v1M265.5 471v2M266.5 473v1M267.5 474v2M268.5 476v2M269.5 478v1M270.5 479v2M271.5 481v1M272.5 482v2M273.5 484v2M274.5 486v2M275.5 488v1M276.5 489v2M277.5 491v2M286.5 492v2M287.5 490v2M288.5 488v2M289.5 487v1M290.5 485v2M291.5 483v2M292.5 482v1M299.5 486v1M300.5 487v2M301.5 489v2M302.5 491v2M303.5 493v2M304.5 495v2M305.5 497v2M321.5 494v2M322.5 493v1M323.5 491v2M324.5 489v2M325.5 488v1M326.5 486v2M327.5 485v1M328.5 483v2M329.5 481v2M330.5 479v2M331.5 477v2M332.5 475v2M333.5 473v2M342.5 470v1M343.5 471v2M344.5 473v1M345.5 474v1M346.5 475v2M347.5 477v1M356.5 477v1M357.5 476v1M358.5 475v1M359.5 474v1M360.5 473v1M361.5 472v1M362.5 471v1M363.5 470v1M364.5 469v1M365.5 468v1M366.5 467v1M367.5 466v1M368.5 465v1M369.5 464v1M370.5 463v1M371.5 462v1M372.5 461v1M373.5 460v1M374.5 459v1M375.5 458v1M376.5 457v1M390.5 457v1M391.5 458v3M392.5 461v3M393.5 464v3M394.5 467v3M395.5 470v3M396.5 473v3M397.5 476v2M398.5 478v2M399.5 480v1M400.5 481v2M401.5 483v2M402.5 485v1M403.5 486v2M404.5 488v1M405.5 489v2M406.5 491v2M407.5 493v2M408.5 495v1M409.5 496v2M410.5 498v2M411.5 500v1M412.5 501v1M413.5 502v2M414.5 504v1M415.5 505v1M416.5 506v2M417.5 508v1M418.5 509v1M419.5 510v1M420.5 511v1M421.5 512v2M422.5 514v1M423.5 515v1M424.5 516v1M425.5 517v1M447.5 520v1M448.5 519v1M449.5 518v1M450.5 517v1M451.5 516v1M452.5 515v1M453.5 514v1M454.5 512v2M455.5 510v2M456.5 508v2M457.5 506v2M458.5 504v2M459.5 502v2M460.5 501v1M461.5 499v2M462.5 498v1M463.5 496v2M464.5 495v1M465.5 494v1M466.5 492v2M467.5 491v1M468.5 489v2M469.5 488v1M470.5 486v2M471.5 484v2M472.5 483v1M473.5 481v2M474.5 480v1M475.5 479v1M476.5 478v1M477.5 477v1M478.5 476v1M479.5 475v1M480.5 474v1M481.5 473v1M482.5 471v2M483.5 469v2M484.5 467v2M485.5 466v1M486.5 464v2M487.5 462v2M496.5 463v1M497.5 464v1M500.5 466v1M501.5 467v1M502.5 468v2M503.5 470v2M504.5 472v3M505.5 475v3M506.5 478v2M507.5 480v3M508.5 483v2M509.5 485v2M510.5 487v1M511.5 488v1M512.5 489v2M513.5 491v1M514.5 492v1M515.5 493v1M538.5 495v1M539.5 494v1M542.5 492v1M543.5 491v1M551.5 490v1M552.5 488v2M553.5 486v2M554.5 484v2M555.5 482v2M556.5 480v2M557.5 478v2M573.5 480v2M574.5 482v1M575.5 483v2M576.5 485v1M577.5 486v1M578.5 487v2M589.5 489v1M590.5 490v1M593.5 492v1M594.5 493v2M595.5 495v1M596.5 496v2M597.5 498v2M598.5 500v1M599.5 501v2M600.5 503v1M603.5 505v1M604.5 506v1M607.5 508v1M610.5 506v1M611.5 505v1M614.5 502v2M615.5 499v3M616.5 497v2M617.5 494v3M618.5 491v3M619.5 489v2M620.5 486v3M621.5 484v2M622.5 483v1M623.5 482v1M626.5 480v1M627.5 479v1M628.5 478v1M629.5 477v1M630.5 476v1M631.5 475v1M632.5 474v1M633.5 473v1M634.5 472v1M635.5 471v1M636.5 469v2M637.5 468v1M638.5 466v2M639.5 465v1M640.5 464v1M641.5 462v2M663.5 453v1M664.5 454v3M665.5 457v2M666.5 459v3M667.5 462v3M668.5 465v2M669.5 467v3M670.5 470v3M671.5 473v2M672.5 475v3M673.5 478v3M674.5 481v2M675.5 483v3M676.5 486v2M677.5 488v3M678.5 491v2M679.5 493v2M680.5 495v2M681.5 497v2M682.5 499v2M683.5 501v2M684.5 503v2M685.5 505v2M686.5 507v1M687.5 508v2M688.5 510v1M689.5 511v1M690.5 512v2M736.5 523v1M737.5 522v1M748.5 522v1M749.5 521v1M750.5 519v2M751.5 518v1M752.5 517v1M753.5 516v1M754.5 515v1M755.5 514v1M756.5 513v1M759.5 511v1M760.5 510v1M761.5 509v1M768.5 505v1M775.5 501v1M776.5 500v1M777.5 498v2M778.5 497v1M779.5 496v1M780.5 494v2M781.5 493v1M782.5 492v1M789.5 488v1M790.5 490v2M791.5 492v2M792.5 494v2M793.5 496v2M794.5 498v2M795.5 500v2M796.5 502v1M806.5 503v1M807.5 504v1M810.5 506v1M817.5 510v1M818.5 511v1M819.5 512v2M820.5 514v1M821.5 515v1M822.5 516v2M823.5 518v1M839.5 521v1M840.5 520v1M843.5 518v1M844.5 517v1M855.5 514v1M856.5 513v1M859.5 511v1M860.5 509v2M861.5 508v1M862.5 506v2M863.5 505v1M864.5 504v1M865.5 502v2M880.5 499v1M881.5 497v2M882.5 496v1M883.5 494v2M884.5 493v1M885.5 492v1M886.5 490v2M887.5 489v1M888.5 488v1M889.5 487v1M890.5 485v2M891.5 484v1M892.5 483v1M893.5 482v1M894.5 481v1M895.5 482v2M896.5 484v1M897.5 485v2M898.5 487v1M899.5 488v1M900.5 489v2M901.5 491v1M902.5 492v2M903.5 494v2M904.5 496v2M905.5 498v2M906.5 500v2M907.5 502v2M916.5 503v1M917.5 504v1M918.5 505v1M919.5 506v1M920.5 507v1M921.5 508v1M932.5 504v1M933.5 503v1M936.5 501v1M939.5 499v1M940.5 498v1M943.5 496v1M944.5 497v1M945.5 498v1M946.5 499v2M947.5 501v1M948.5 502v1M949.5 503v1M950.5 504v1M951.5 505v2M952.5 507v2M953.5 509v2M954.5 511v1M955.5 512v2M956.5 514v2M957.5 516v1M960.5 518v1M961.5 519v1M964.5 521v1M971.5 525v1M974.5 523v1M975.5 522v1M978.5 520v1M979.5 519v1M980.5 518v1M981.5 517v1M982.5 516v1M983.5 515v1M984.5 514v1M985.5 513v1M1007.5 506v1M1008.5 507v1M1011.5 509v1M1012.5 510v1M1013.5 511v1M1014.5 509v2M1015.5 507v2M1016.5 505v2M1017.5 503v2M1018.5 501v2M1019.5 499v2M1020.5 498v1M1021.5 496v2M1022.5 494v2M1023.5 492v2M1024.5 490v2M1025.5 488v2M1026.5 486v2M1027.5 485v1M1042.5 482v2M1043.5 484v2M1044.5 486v2M1045.5 488v1M1046.5 489v2M1047.5 491v2M1048.5 493v1M1049.5 494v2M1050.5 496v1M1051.5 497v2M1052.5 499v2M1053.5 501v1M1054.5 502v2M1055.5 504v1M1058.5 506v1M1059.5 507v1M1062.5 509v1M1105.5 516v1M1106.5 515v1M1107.5 514v1M1108.5 513v1M1109.5 512v1M1110.5 511v1M1111.5 510v1M1114.5 508v1M1115.5 507v1M1118.5 505v1M1125.5 509v1M1128.5 507v1M1129.5 506v1M1132.5 504v1M1133.5 503v1M1134.5 502v1M1135.5 500v2M1136.5 499v1M1137.5 498v1M1138.5 497v1M1139.5 496v1M1140.5 494v2M1141.5 492v2M1142.5 490v2M1143.5 489v1M1144.5 487v2M1145.5 485v2M1146.5 483v2M1147.5 481v2M1148.5 479v2M1149.5 477v2M1150.5 475v2M1151.5 473v2M1152.5 471v2M1153.5 469v2"/><path fill="none" stroke="#40e8e8" d="M389 460.5h2M385 461.5h4M661 461.5h2M664 461.5h2M383 462.5h2M659 462.5h2M666 462.5h2M381 463.5h2M393 463.5h2M657 463.5h2M668 463.5h2M377 466.5h2M652 467.5h2M374 468.5h2M370 471.5h2M501 471.5h2M647 471.5h2M497 472.5h4M503 472.5h2M367 473.5h2M495 473.5h2M365 474.5h2M643 474.5h2M363 475.5h2M507 475.5h2M361 476.5h2M491 476.5h2M359 477.5h2M357 478.5h2M345 479.5h12M512 479.5h2M341 480.5h4M339 481.5h2M571 482.5h3M268 483.5h5M517 483.5h2M567 483.5h4M574 483.5h4M191 484.5h11M264 484.5h4M273 484.5h2M335 484.5h2M564 484.5h3M578 484.5h5M184 485.5h7M202 485.5h2M275 485.5h2M562 485.5h2M583 485.5h5M179 486.5h5M277 486.5h3M521 486.5h2M560 486.5h2M588 486.5h4M631 486.5h2M175 487.5h4M260 487.5h2M280 487.5h2M291 487.5h9M558 487.5h2M592 487.5h2M170 488.5h5M206 488.5h2M282 488.5h2M287 488.5h4M300 488.5h2M330 488.5h2M524 488.5h2M556 488.5h2M165 489.5h5M284 489.5h3M302 489.5h2M526 489.5h2M1041 489.5h4M86 490.5h14M161 490.5h4M304 490.5h2M528 490.5h2M596 490.5h2M626 490.5h2M1039 490.5h2M1045 490.5h4M82 491.5h4M100 491.5h4M159 491.5h2M306 491.5h2M326 491.5h2M530 491.5h2M552 491.5h2M1037 491.5h2M1049 491.5h2M80 492.5h2M104 492.5h2M211 492.5h2M308 492.5h4M324 492.5h2M532 492.5h4M541 492.5h11M898 492.5h4M1035 492.5h2M78 493.5h2M106 493.5h2M312 493.5h5M322 493.5h2M536 493.5h5M622 493.5h2M894 493.5h4M902 493.5h2M76 494.5h2M108 494.5h2M317 494.5h5M601 494.5h2M904 494.5h2M1053 494.5h2M110 495.5h2M619 495.5h2M906 495.5h2M112 496.5h4M890 496.5h2M908 496.5h2M1030 496.5h2M1056 496.5h2M116 497.5h3M605 497.5h2M910 497.5h4M71 498.5h2M119 498.5h2M151 498.5h2M218 498.5h2M607 498.5h4M615 498.5h2M789 498.5h2M914 498.5h2M121 499.5h2M147 499.5h4M611 499.5h4M787 499.5h2M791 499.5h4M916 499.5h2M1060 499.5h2M123 500.5h3M144 500.5h3M248 500.5h2M795 500.5h10M885 500.5h2M918 500.5h2M942 500.5h3M126 501.5h2M140 501.5h4M805 501.5h4M920 501.5h2M938 501.5h4M945 501.5h4M1063 501.5h2M128 502.5h2M135 502.5h5M223 502.5h2M699 502.5h2M783 502.5h2M809 502.5h3M922 502.5h4M933 502.5h5M949 502.5h2M1065 502.5h2M130 503.5h5M244 503.5h2M812 503.5h2M881 503.5h2M926 503.5h7M951 503.5h2M1067 503.5h2M242 504.5h2M780 504.5h2M814 504.5h2M879 504.5h2M953 504.5h2M227 505.5h2M238 505.5h4M703 505.5h2M816 505.5h2M877 505.5h2M955 505.5h2M1070 505.5h2M1137 505.5h2M229 506.5h9M705 506.5h2M818 506.5h2M875 506.5h2M1072 506.5h2M1135 506.5h2M463 507.5h2M707 507.5h2M776 507.5h2M872 507.5h3M958 507.5h2M1018 507.5h2M1074 507.5h2M1133 507.5h2M709 508.5h2M870 508.5h2M1016 508.5h2M1076 508.5h2M1131 508.5h2M27 509.5h2M711 509.5h2M773 509.5h2M822 509.5h2M868 509.5h2M1005 509.5h5M1014 509.5h2M1078 509.5h2M1127 509.5h4M29 510.5h2M435 510.5h2M713 510.5h2M771 510.5h2M824 510.5h2M866 510.5h2M962 510.5h2M1001 510.5h4M1010 510.5h4M1080 510.5h2M1122 510.5h5M31 511.5h2M59 511.5h2M458 511.5h2M715 511.5h2M769 511.5h2M826 511.5h2M864 511.5h2M998 511.5h3M1082 511.5h3M1117 511.5h5M717 512.5h2M767 512.5h2M828 512.5h2M862 512.5h2M965 512.5h2M994 512.5h4M1085 512.5h4M1115 512.5h2M34 513.5h2M439 513.5h2M765 513.5h2M830 513.5h3M860 513.5h2M991 513.5h3M1089 513.5h3M1113 513.5h2M36 514.5h2M55 514.5h2M441 514.5h2M454 514.5h2M720 514.5h2M763 514.5h2M833 514.5h2M858 514.5h2M989 514.5h2M1092 514.5h4M1108 514.5h5M38 515.5h2M53 515.5h2M443 515.5h2M450 515.5h4M722 515.5h2M761 515.5h2M835 515.5h2M854 515.5h4M969 515.5h2M987 515.5h2M1096 515.5h12M40 516.5h4M49 516.5h4M445 516.5h5M724 516.5h2M759 516.5h2M837 516.5h17M971 516.5h4M982 516.5h5M44 517.5h5M726 517.5h2M757 517.5h2M975 517.5h7M728 518.5h4M755 518.5h2M732 519.5h5M753 519.5h2M737 520.5h7M749 520.5h4M744 521.5h5M26.5 508v1M33.5 512v1M57.5 513v1M58.5 512v1M61.5 510v1M62.5 509v1M63.5 507v2M64.5 506v1M65.5 505v1M66.5 503v2M67.5 502v1M68.5 501v1M69.5 500v1M70.5 499v1M73.5 497v1M74.5 496v1M75.5 495v1M153.5 497v1M154.5 496v1M155.5 495v1M156.5 494v1M157.5 493v1M158.5 492v1M204.5 486v1M205.5 487v1M208.5 489v1M209.5 490v1M210.5 491v1M213.5 493v1M214.5 494v1M215.5 495v1M216.5 496v1M217.5 497v1M220.5 499v1M221.5 500v1M222.5 501v1M225.5 503v1M226.5 504v1M246.5 502v1M247.5 501v1M250.5 499v1M251.5 498v1M252.5 496v2M253.5 495v1M254.5 494v1M255.5 492v2M256.5 491v1M257.5 490v1M258.5 489v1M259.5 488v1M262.5 486v1M263.5 485v1M328.5 490v1M329.5 489v1M332.5 487v1M333.5 486v1M334.5 485v1M337.5 483v1M338.5 482v1M369.5 472v1M372.5 470v1M373.5 469v1M376.5 467v1M379.5 465v1M380.5 464v1M391.5 461v1M392.5 462v1M395.5 464v1M396.5 465v1M397.5 466v1M398.5 467v1M399.5 468v1M400.5 469v1M401.5 470v1M402.5 471v1M403.5 472v1M404.5 473v1M405.5 474v1M406.5 475v2M407.5 477v1M408.5 478v1M409.5 479v2M410.5 481v1M411.5 482v1M412.5 483v1M413.5 484v2M414.5 486v1M415.5 487v1M416.5 488v2M417.5 490v1M418.5 491v1M419.5 492v1M420.5 493v2M421.5 495v1M422.5 496v1M423.5 497v2M424.5 499v1M425.5 500v1M426.5 501v1M427.5 502v1M428.5 503v1M429.5 504v1M430.5 505v1M431.5 506v1M432.5 507v1M433.5 508v1M434.5 509v1M437.5 511v1M438.5 512v1M456.5 513v1M457.5 512v1M460.5 510v1M461.5 509v1M462.5 508v1M465.5 506v1M466.5 505v1M467.5 504v1M468.5 503v1M469.5 502v1M470.5 500v2M471.5 499v1M472.5 498v1M473.5 497v1M474.5 496v1M475.5 495v1M476.5 494v1M477.5 492v2M478.5 491v1M479.5 490v1M480.5 489v1M481.5 488v1M482.5 487v1M483.5 485v2M484.5 484v1M485.5 483v1M486.5 481v2M487.5 480v1M488.5 479v1M489.5 478v1M490.5 477v1M493.5 475v1M494.5 474v1M505.5 473v1M506.5 474v1M509.5 476v1M510.5 477v1M511.5 478v1M514.5 480v1M515.5 481v1M516.5 482v1M519.5 484v1M520.5 485v1M523.5 487v1M554.5 490v1M555.5 489v1M594.5 488v1M595.5 489v1M598.5 491v1M599.5 492v1M600.5 493v1M603.5 495v1M604.5 496v1M617.5 497v1M618.5 496v1M621.5 494v1M624.5 492v1M625.5 491v1M628.5 489v1M629.5 488v1M630.5 487v1M633.5 485v1M634.5 484v1M635.5 483v1M636.5 482v1M637.5 481v1M638.5 479v2M639.5 478v1M640.5 477v1M641.5 476v1M642.5 475v1M645.5 473v1M646.5 472v1M649.5 470v1M650.5 469v1M651.5 468v1M654.5 466v1M655.5 465v1M656.5 464v1M663.5 460v1M670.5 464v1M671.5 465v1M672.5 466v1M673.5 467v2M674.5 469v1M675.5 470v1M676.5 471v1M677.5 472v1M678.5 473v2M679.5 475v1M680.5 476v2M681.5 478v2M682.5 480v1M683.5 481v2M684.5 483v1M685.5 484v2M686.5 486v1M687.5 487v2M688.5 489v1M689.5 490v1M690.5 491v2M691.5 493v1M692.5 494v1M693.5 495v1M694.5 496v2M695.5 498v1M696.5 499v1M697.5 500v1M698.5 501v1M701.5 503v1M702.5 504v1M719.5 513v1M775.5 508v1M778.5 506v1M779.5 505v1M782.5 503v1M785.5 501v1M786.5 500v1M820.5 507v1M821.5 508v1M883.5 502v1M884.5 501v1M887.5 499v1M888.5 498v1M889.5 497v1M892.5 495v1M893.5 494v1M957.5 506v1M960.5 508v1M961.5 509v1M964.5 511v1M967.5 513v1M968.5 514v1M1020.5 506v1M1021.5 505v1M1022.5 504v1M1023.5 503v1M1024.5 502v1M1025.5 501v1M1026.5 500v1M1027.5 499v1M1028.5 498v1M1029.5 497v1M1032.5 495v1M1033.5 494v1M1034.5 493v1M1051.5 492v1M1052.5 493v1M1055.5 495v1M1058.5 497v1M1059.5 498v1M1062.5 500v1M1069.5 504v1M1139.5 504v1M1140.5 503v1M1141.5 502v1M1142.5 501v1M1143.5 500v1M1144.5 499v1M1145.5 498v1M1146.5 497v1M1147.5 496v1M1148.5 494v2M1149.5 493v1M1150.5 492v1M1151.5 490v2M1152.5 489v1M1153.5 488v1"/><path fill="none" stroke="#ff80ff" d="M642 432.5h2M644 433.5h2M655 433.5h3M646 434.5h2M651 434.5h4M658 434.5h2M380 435.5h4M648 435.5h3M660 435.5h2M376 436.5h4M662 436.5h2M257 437.5h2M260 439.5h2M477 445.5h2M334 448.5h8M68 449.5h2M68 450.5h2M159 454.5h2M1027 457.5h4M1031 458.5h4M558 459.5h2M893 459.5h2M893 460.5h2M76 461.5h2M1037 461.5h2M78 462.5h2M80 463.5h2M786 469.5h4M782 470.5h4M192 474.5h2M292 475.5h2M348 475.5h4M292 476.5h2M352 476.5h4M188 477.5h2M186 478.5h2M182 479.5h4M177 480.5h5M173 481.5h4M866 485.5h2M151 486.5h2M147 487.5h4M544 487.5h2M92 488.5h2M145 488.5h2M546 488.5h2M773 488.5h2M548 489.5h2M942 489.5h2M550 490.5h2M876 490.5h2M769 491.5h2M97 492.5h2M767 492.5h2M765 493.5h2M763 494.5h2M101 495.5h2M761 495.5h2M579 497.5h2M998 497.5h9M996 498.5h2M994 499.5h2M992 500.5h2M801 505.5h2M278 506.5h8M796 508.5h3M1012 511.5h2M306 514.5h2M529 515.5h2M849 515.5h4M525 516.5h4M845 516.5h4M520 517.5h5M110 518.5h2M124 518.5h2M516 518.5h4M908 518.5h2M126 519.5h2M128 520.5h2M1102 520.5h2M130 521.5h2M740 521.5h2M1098 523.5h2M601 524.5h2M1056 524.5h2M1095 525.5h2M746 526.5h2M1093 526.5h2M605 527.5h3M1060 527.5h2M1091 527.5h2M1087 528.5h4M1063 529.5h2M1075 529.5h12M1065 530.5h2M1073 530.5h2M1067 531.5h2M1071 531.5h2M221 532.5h2M1069 532.5h2M219 533.5h2M705 533.5h9M831 533.5h8M217 534.5h2M714 534.5h4M215 535.5h2M718 535.5h2M720 536.5h2M731 536.5h2M827 536.5h2M38 537.5h2M722 537.5h2M729 537.5h2M960 537.5h2M36 538.5h2M724 538.5h2M727 538.5h2M824 538.5h2M34 539.5h2M228 540.5h2M965 541.5h2M29 543.5h2M969 544.5h3M438 548.5h2M434 549.5h4M429 550.5h5M425 551.5h4M26.5 546v1M27.5 545v1M28.5 544v1M31.5 542v1M32.5 541v1M33.5 540v1M40.5 535v2M41.5 533v2M42.5 531v2M43.5 529v2M44.5 527v2M45.5 525v2M46.5 523v2M47.5 521v2M48.5 519v2M49.5 517v2M50.5 514v3M51.5 512v2M52.5 510v2M53.5 508v2M54.5 504v4M55.5 500v4M56.5 496v4M57.5 492v4M58.5 488v4M59.5 484v4M60.5 480v4M61.5 475v5M62.5 471v4M63.5 467v4M64.5 463v4M65.5 459v4M66.5 455v4M67.5 451v4M68.5 448v1M70.5 451v2M71.5 453v2M72.5 455v1M73.5 456v2M74.5 458v2M75.5 460v1M82.5 464v2M83.5 466v3M84.5 469v3M85.5 472v3M86.5 475v3M87.5 478v3M88.5 481v3M89.5 484v2M90.5 486v1M91.5 487v1M94.5 489v1M95.5 490v1M96.5 491v1M99.5 493v1M100.5 494v1M103.5 496v2M104.5 498v3M105.5 501v4M106.5 505v3M107.5 508v3M108.5 511v4M109.5 515v3M110.5 519v1M111.5 517v1M112.5 515v2M113.5 513v2M114.5 512v1M115.5 510v2M116.5 508v2M117.5 507v1M118.5 508v2M119.5 510v1M120.5 511v2M121.5 513v2M122.5 515v1M123.5 516v2M131.5 520v1M132.5 517v3M133.5 513v4M134.5 510v3M135.5 507v3M136.5 503v4M137.5 500v3M138.5 498v2M139.5 496v2M140.5 495v1M141.5 493v2M142.5 492v1M143.5 491v1M144.5 489v2M152.5 484v2M153.5 479v5M154.5 474v5M155.5 469v5M156.5 465v4M157.5 460v5M158.5 455v5M159.5 452v2M160.5 455v2M161.5 457v3M162.5 460v3M163.5 463v2M164.5 465v3M165.5 468v3M166.5 471v2M167.5 473v1M168.5 474v2M169.5 476v1M170.5 477v1M171.5 478v2M172.5 480v1M190.5 476v1M191.5 475v1M194.5 473v1M195.5 474v2M196.5 476v2M197.5 478v2M198.5 480v2M199.5 482v2M200.5 484v2M201.5 486v3M202.5 489v4M203.5 493v5M204.5 498v5M205.5 503v4M206.5 507v5M207.5 512v4M208.5 516v4M209.5 520v2M210.5 522v3M211.5 525v2M212.5 527v2M213.5 529v3M214.5 532v2M215.5 534v1M223.5 533v1M224.5 534v2M225.5 536v1M226.5 537v1M227.5 538v2M229.5 539v1M229.5 541v1M230.5 533v6M231.5 527v6M232.5 521v6M233.5 516v5M234.5 510v6M235.5 504v6M236.5 501v3M237.5 500v1M238.5 498v2M239.5 497v1M240.5 496v1M241.5 494v2M242.5 493v1M243.5 491v2M244.5 489v2M245.5 486v3M246.5 483v3M247.5 481v2M248.5 478v3M249.5 476v2M250.5 472v4M251.5 466v6M252.5 461v5M253.5 455v6M254.5 450v5M255.5 445v5M256.5 439v6M257.5 436v1M257.5 438v1M259.5 438v1M262.5 440v1M263.5 441v1M264.5 442v3M265.5 445v5M266.5 450v5M267.5 455v6M268.5 461v5M269.5 466v5M270.5 471v5M271.5 476v5M272.5 481v4M273.5 485v4M274.5 489v4M275.5 493v4M276.5 497v4M277.5 501v4M278.5 505v1M285.5 504v2M286.5 500v4M287.5 495v5M288.5 490v5M289.5 486v4M290.5 481v5M291.5 477v4M292.5 474v1M294.5 477v2M295.5 479v2M296.5 481v1M297.5 482v2M298.5 484v2M299.5 486v3M300.5 489v4M301.5 493v4M302.5 497v4M303.5 501v4M304.5 505v4M305.5 509v4M306.5 513v1M306.5 515v1M308.5 513v1M309.5 511v2M310.5 510v1M311.5 509v1M312.5 508v1M313.5 507v1M314.5 506v1M315.5 505v1M316.5 504v1M317.5 503v1M318.5 502v1M319.5 501v1M320.5 499v2M321.5 495v4M322.5 491v4M323.5 487v4M324.5 484v3M325.5 480v4M326.5 476v4M327.5 473v3M328.5 469v4M329.5 465v4M330.5 461v4M331.5 458v3M332.5 454v4M333.5 450v4M334.5 449v1M341.5 449v1M342.5 450v4M343.5 454v4M344.5 458v4M345.5 462v4M346.5 466v4M347.5 470v4M348.5 474v1M355.5 475v1M356.5 473v2M357.5 471v2M358.5 469v2M359.5 467v2M360.5 465v2M361.5 463v2M362.5 461v2M363.5 459v2M364.5 457v2M365.5 455v2M366.5 453v2M367.5 451v2M368.5 449v2M369.5 448v1M370.5 446v2M371.5 444v2M372.5 442v2M373.5 441v1M374.5 439v2M375.5 437v2M384.5 436v2M385.5 438v2M386.5 440v2M387.5 442v1M388.5 443v2M389.5 445v2M390.5 447v4M391.5 451v8M392.5 459v7M393.5 466v8M394.5 474v8M395.5 482v7M396.5 489v8M397.5 497v5M398.5 502v2M399.5 504v3M400.5 507v3M401.5 510v2M402.5 512v3M403.5 515v2M404.5 517v3M405.5 520v2M406.5 522v3M407.5 525v2M408.5 527v2M409.5 529v3M410.5 532v2M411.5 534v2M412.5 536v1M413.5 537v2M414.5 539v1M415.5 540v1M416.5 541v2M417.5 543v1M418.5 544v1M419.5 545v1M420.5 546v1M421.5 547v1M422.5 548v1M423.5 549v1M424.5 550v1M439.5 547v1M440.5 545v2M441.5 543v2M442.5 541v2M443.5 539v2M444.5 537v2M445.5 535v2M446.5 532v3M447.5 529v3M448.5 526v3M449.5 523v3M450.5 521v2M451.5 518v3M452.5 515v3M453.5 511v4M454.5 507v4M455.5 502v5M456.5 497v5M457.5 493v4M458.5 488v5M459.5 484v4M460.5 480v4M461.5 478v2M462.5 475v3M463.5 473v2M464.5 471v2M465.5 468v3M466.5 466v2M467.5 463v3M468.5 461v2M469.5 459v2M470.5 456v3M471.5 454v2M472.5 452v2M473.5 450v2M474.5 448v2M475.5 447v1M476.5 446v1M479.5 444v1M480.5 443v1M481.5 441v2M482.5 439v2M483.5 436v3M484.5 433v3M485.5 431v2M486.5 428v3M487.5 426v2M488.5 424v2M489.5 426v2M490.5 428v2M491.5 430v2M492.5 432v2M493.5 434v2M494.5 436v2M495.5 438v3M496.5 441v3M497.5 444v3M498.5 447v3M499.5 450v3M500.5 453v3M501.5 456v3M502.5 459v5M503.5 464v6M504.5 470v7M505.5 477v7M506.5 484v6M507.5 490v7M508.5 497v6M509.5 503v4M510.5 507v2M511.5 509v2M512.5 511v2M513.5 513v1M514.5 514v2M515.5 516v2M531.5 513v2M532.5 511v2M533.5 509v2M534.5 507v2M535.5 505v2M536.5 503v2M537.5 501v2M538.5 499v2M539.5 497v2M540.5 495v2M541.5 493v2M542.5 491v2M543.5 489v2M544.5 488v1M551.5 488v2M552.5 484v4M553.5 479v5M554.5 474v5M555.5 470v4M556.5 465v5M557.5 461v4M558.5 458v1M558.5 460v1M560.5 460v1M561.5 461v1M562.5 462v1M563.5 463v1M564.5 464v1M565.5 465v1M566.5 466v1M567.5 467v1M568.5 468v2M569.5 470v1M570.5 471v1M571.5 472v1M572.5 473v2M573.5 475v4M574.5 479v3M575.5 482v4M576.5 486v4M577.5 490v3M578.5 493v4M579.5 498v1M581.5 496v1M582.5 495v1M583.5 494v1M584.5 493v1M585.5 492v1M586.5 491v1M587.5 492v1M588.5 493v2M589.5 495v1M590.5 496v1M591.5 497v2M592.5 499v1M593.5 500v2M594.5 502v3M595.5 505v4M596.5 509v3M597.5 512v3M598.5 515v4M599.5 519v3M600.5 522v2M603.5 525v1M604.5 526v1M607.5 528v1M608.5 525v2M609.5 522v3M610.5 519v3M611.5 517v2M612.5 514v3M613.5 512v2M614.5 507v5M615.5 500v7M616.5 494v6M617.5 487v7M618.5 480v7M619.5 474v6M620.5 467v7M621.5 463v4M622.5 462v1M623.5 461v1M624.5 460v1M625.5 459v1M626.5 458v1M627.5 457v1M628.5 456v1M629.5 455v1M630.5 453v2M631.5 452v1M632.5 451v1M633.5 449v2M634.5 448v1M635.5 446v2M636.5 444v2M637.5 442v2M638.5 440v2M639.5 438v2M640.5 436v2M641.5 434v2M642.5 433v1M663.5 437v3M664.5 440v7M665.5 447v7M666.5 454v8M667.5 462v7M668.5 469v7M669.5 476v7M670.5 483v6M671.5 489v5M672.5 494v5M673.5 499v5M674.5 504v5M675.5 509v5M676.5 514v5M677.5 519v4M678.5 523v4M679.5 527v4M680.5 531v4M681.5 535v3M682.5 538v4M683.5 542v4M684.5 546v2M685.5 548v1M686.5 549v2M687.5 551v1M688.5 552v1M689.5 553v2M690.5 555v1M691.5 556v1M692.5 554v2M693.5 553v1M694.5 551v2M695.5 550v1M696.5 549v1M697.5 547v2M698.5 546v1M699.5 544v2M700.5 542v2M701.5 540v2M702.5 538v2M703.5 536v2M704.5 534v2M726.5 539v1M733.5 534v2M734.5 532v2M735.5 530v2M736.5 528v2M737.5 526v2M738.5 524v2M739.5 522v2M740.5 520v1M742.5 522v1M743.5 523v1M744.5 524v1M745.5 525v1M747.5 527v1M748.5 524v2M749.5 521v3M750.5 518v3M751.5 516v2M752.5 513v3M753.5 511v2M754.5 508v3M755.5 506v2M756.5 504v2M757.5 502v2M758.5 500v2M759.5 498v2M760.5 496v2M771.5 490v1M772.5 489v1M775.5 486v2M776.5 484v2M777.5 481v3M778.5 479v2M779.5 477v2M780.5 474v3M781.5 472v2M782.5 471v1M789.5 470v2M790.5 472v6M791.5 478v6M792.5 484v6M793.5 490v5M794.5 495v6M795.5 501v6M796.5 507v1M796.5 509v1M799.5 507v1M800.5 506v1M803.5 504v1M804.5 505v2M805.5 507v1M806.5 508v2M807.5 510v1M808.5 511v1M809.5 512v2M810.5 514v1M811.5 515v1M812.5 516v1M813.5 517v1M814.5 518v1M815.5 519v1M816.5 520v1M817.5 521v2M818.5 523v2M819.5 525v3M820.5 528v3M821.5 531v2M822.5 533v3M823.5 536v2M824.5 539v1M826.5 537v1M829.5 535v1M830.5 534v1M838.5 532v1M839.5 530v2M840.5 527v3M841.5 525v2M842.5 523v2M843.5 520v3M844.5 518v2M845.5 517v1M853.5 513v2M854.5 512v1M855.5 510v2M856.5 508v2M857.5 507v1M858.5 505v2M859.5 503v2M860.5 500v3M861.5 497v3M862.5 494v3M863.5 492v2M864.5 489v3M865.5 486v3M866.5 484v1M868.5 486v2M869.5 488v1M870.5 489v1M871.5 490v2M872.5 492v1M873.5 493v1M874.5 492v1M875.5 491v1M878.5 489v1M879.5 488v1M880.5 486v2M881.5 483v3M882.5 481v2M883.5 478v3M884.5 475v3M885.5 473v2M886.5 470v3M887.5 468v2M888.5 466v2M889.5 465v1M890.5 463v2M891.5 462v1M892.5 461v1M894.5 458v1M895.5 461v4M896.5 465v4M897.5 469v4M898.5 473v4M899.5 477v4M900.5 481v4M901.5 485v5M902.5 490v4M903.5 494v5M904.5 499v5M905.5 504v4M906.5 508v5M907.5 513v4M908.5 517v1M908.5 519v1M910.5 516v2M911.5 515v1M912.5 514v1M913.5 512v2M914.5 511v1M915.5 510v1M916.5 511v2M917.5 513v2M918.5 515v2M919.5 517v2M920.5 519v2M921.5 521v2M922.5 523v1M923.5 521v2M924.5 520v1M925.5 518v2M926.5 517v1M927.5 516v1M928.5 514v2M929.5 512v2M930.5 510v2M931.5 508v2M932.5 505v3M933.5 503v2M934.5 501v2M935.5 499v2M936.5 497v2M937.5 496v1M938.5 494v2M939.5 493v1M940.5 492v1M941.5 490v2M943.5 488v1M944.5 490v3M945.5 493v3M946.5 496v4M947.5 500v3M948.5 503v3M949.5 506v3M950.5 509v3M951.5 512v4M952.5 516v3M953.5 519v4M954.5 523v3M955.5 526v3M956.5 529v4M957.5 533v2M958.5 535v1M959.5 536v1M962.5 538v1M963.5 539v1M964.5 540v1M967.5 542v1M968.5 543v1M971.5 545v1M972.5 541v3M973.5 538v3M974.5 535v3M975.5 533v2M976.5 530v3M977.5 527v3M978.5 524v3M979.5 522v2M980.5 519v3M981.5 516v3M982.5 514v2M983.5 511v3M984.5 509v2M985.5 507v2M986.5 506v1M987.5 505v1M988.5 504v1M989.5 503v1M990.5 502v1M991.5 501v1M1006.5 498v1M1007.5 499v2M1008.5 501v2M1009.5 503v3M1010.5 506v2M1011.5 508v2M1012.5 510v1M1013.5 512v2M1014.5 507v4M1015.5 502v5M1016.5 498v4M1017.5 494v4M1018.5 489v5M1019.5 485v4M1020.5 481v4M1021.5 477v4M1022.5 474v3M1023.5 470v4M1024.5 466v4M1025.5 463v3M1026.5 459v4M1027.5 458v1M1035.5 459v1M1036.5 460v1M1039.5 462v1M1040.5 463v1M1041.5 464v3M1042.5 467v5M1043.5 472v5M1044.5 477v5M1045.5 482v4M1046.5 486v5M1047.5 491v5M1048.5 496v4M1049.5 500v4M1050.5 504v3M1051.5 507v4M1052.5 511v4M1053.5 515v3M1054.5 518v4M1055.5 522v2M1058.5 525v1M1059.5 526v1M1062.5 528v1M1097.5 524v1M1100.5 522v1M1101.5 521v1M1104.5 518v2M1105.5 516v2M1106.5 514v2M1107.5 512v2M1108.5 510v2M1109.5 508v2M1110.5 506v2M1111.5 504v2M1112.5 502v2M1113.5 501v1M1114.5 499v2M1115.5 498v1M1116.5 497v1M1117.5 495v2M1118.5 494v1M1119.5 495v2M1120.5 497v1M1121.5 498v2M1122.5 500v2M1123.5 502v1M1124.5 503v2M1125.5 505v1M1126.5 504v1M1127.5 502v2M1128.5 501v1M1129.5 500v1M1130.5 498v2M1131.5 497v1M1132.5 495v2M1133.5 493v2M1134.5 491v2M1135.5 488v3M1136.5 486v2M1137.5 484v2M1138.5 482v2M1139.5 479v3M1140.5 476v3M1141.5 473v3M1142.5 469v4M1143.5 466v3M1144.5 463v3M1145.5 460v3M1146.5 457v3M1147.5 453v4M1148.5 449v4M1149.5 445v4M1150.5 442v3M1151.5 438v4M1152.5 434v4M1153.5 432v2"/><text x="22.5" y="417.5" font-size="12" fill="#ffff80" stroke="#ffff80">KDJ(9,3,3) K: +42.94</text><path d="M139 410h1v1h1v1h1v1h-2v8h-1v-8h-2v-1h1v-1h1z" fill="#e62a2a"/><text x="146" y="417.5" font-size="12" fill="#40e8e8" stroke="#40e8e8">D: +34.85</text><path d="M201 410h1v1h1v1h1v1h-2v8h-1v-8h-2v-1h1v-1h1z" fill="#e62a2a"/><text x="209" y="417.5" font-size="12" fill="#ff80ff" stroke="#ff80ff">J: +59.13</text><path d="M262 410h1v1h1v1h1v1h-2v8h-1v-8h-2v-1h1v-1h1z" fill="#e62a2a"/><path d="M1110.5 404V422.5H1176" stroke="#8c0000" fill="none"/><text x="1119" y="418.06" font-size="12" fill="#e0e0e0" stroke="#e0e0e0">指标说明</text><path d="M1110.5 558V576.5H1176" stroke="#8c0000" fill="none"/><text x="1119" y="572.06" font-size="12" fill="#e0e0e0" stroke="#e0e0e0">指标说明</text><path fill="none" stroke="#d0d0d0" d="M417 599.5h5M408 600.5h9M422 600.5h4M399 601.5h9M426 601.5h3M393 602.5h6M429 602.5h2M390 603.5h3M431 603.5h2M433 604.5h2M386 606.5h2M675 609.5h5M671 610.5h4M680 610.5h4M667 611.5h4M684 611.5h3M664 612.5h3M687 612.5h2M689 613.5h2M691 614.5h2M693 615.5h2M658 617.5h2M696 617.5h2M699 619.5h2M701 620.5h2M704 622.5h2M651 623.5h2M649 624.5h2M707 624.5h2M646 626.5h2M367 627.5h2M644 627.5h2M365 628.5h2M642 628.5h2M363 629.5h2M361 630.5h2M639 630.5h2M358 631.5h3M637 631.5h2M355 632.5h3M635 632.5h2M352 633.5h3M633 633.5h2M349 634.5h3M515 634.5h14M542 634.5h13M618 634.5h8M631 634.5h2M347 635.5h2M502 635.5h13M529 635.5h13M555 635.5h5M589 635.5h29M626 635.5h5M344 636.5h3M459 636.5h4M500 636.5h2M560 636.5h5M580 636.5h9M342 637.5h2M463 637.5h5M497 637.5h3M565 637.5h5M575 637.5h5M468 638.5h3M495 638.5h2M570 638.5h5M471 639.5h2M491 639.5h4M473 640.5h6M485 640.5h6M337 641.5h2M479 641.5h6M333 644.5h2M312 645.5h13M329 645.5h4M72 646.5h4M309 646.5h3M325 646.5h4M68 647.5h4M76 647.5h2M299 647.5h10M78 648.5h2M297 648.5h2M295 649.5h2M81 650.5h2M293 650.5h2M291 651.5h2M84 652.5h2M289 652.5h2M732 652.5h2M86 653.5h2M109 653.5h11M287 653.5h2M734 653.5h2M88 654.5h21M120 654.5h2M285 654.5h2M736 654.5h2M122 655.5h2M738 655.5h2M282 656.5h2M260 657.5h7M280 657.5h2M741 657.5h2M256 658.5h4M267 658.5h13M254 659.5h2M252 660.5h2M745 660.5h2M129 661.5h2M204 661.5h19M249 661.5h3M200 662.5h4M223 662.5h2M244 662.5h5M748 662.5h3M198 663.5h2M238 663.5h6M751 663.5h4M196 664.5h2M233 664.5h5M755 664.5h5M194 665.5h2M227 665.5h2M231 665.5h2M760 665.5h4M192 666.5h2M229 666.5h2M764 666.5h3M136 667.5h2M190 667.5h2M767 667.5h2M138 668.5h3M188 668.5h2M769 668.5h2M141 669.5h6M177 669.5h11M771 669.5h2M147 670.5h2M158 670.5h19M773 670.5h2M156 671.5h2M775 671.5h2M150 672.5h2M154 672.5h2M777 672.5h4M152 673.5h2M781 673.5h4M785 674.5h2M787 675.5h2M789 676.5h2M791 677.5h9M800 678.5h13M813 679.5h7M820 680.5h2M822 681.5h2M824 682.5h2M826 683.5h2M828 684.5h2M833 688.5h2M838 692.5h2M840 693.5h2M842 694.5h2M845 696.5h2M848 698.5h2M943 699.5h8M851 700.5h2M941 700.5h2M951 700.5h4M939 701.5h2M955 701.5h4M854 702.5h2M925 702.5h14M959 702.5h3M922 703.5h3M962 703.5h2M857 704.5h2M918 704.5h4M859 705.5h5M913 705.5h5M864 706.5h5M908 706.5h5M966 706.5h2M869 707.5h2M906 707.5h2M871 708.5h2M904 708.5h2M873 709.5h2M902 709.5h2M970 709.5h2M875 710.5h3M893 710.5h9M972 710.5h2M878 711.5h6M889 711.5h4M974 711.5h2M884 712.5h5M976 712.5h3M1060 712.5h4M979 713.5h3M1056 713.5h4M1064 713.5h4M982 714.5h2M1052 714.5h4M1068 714.5h4M984 715.5h6M1048 715.5h4M1072 715.5h5M990 716.5h5M1044 716.5h4M1077 716.5h6M995 717.5h2M1042 717.5h2M1083 717.5h4M997 718.5h3M1087 718.5h2M1148 718.5h2M1000 719.5h3M1003 720.5h2M1090 720.5h2M1005 721.5h2M1092 721.5h2M1144 721.5h2M1007 722.5h2M1142 722.5h2M1095 723.5h2M1140 723.5h2M1097 724.5h2M1138 724.5h2M1011 725.5h2M1026 725.5h10M1099 725.5h4M1013 726.5h2M1024 726.5h2M1103 726.5h3M1015 727.5h4M1022 727.5h2M1106 727.5h4M1134 727.5h2M1019 728.5h3M1110 728.5h8M1118 729.5h15M26.5 595v1M27.5 596v2M28.5 598v1M29.5 599v2M30.5 601v2M31.5 603v1M32.5 604v2M33.5 606v1M34.5 607v2M35.5 609v2M36.5 611v1M37.5 612v2M38.5 614v2M39.5 616v1M40.5 617v1M41.5 618v2M42.5 620v1M43.5 621v1M44.5 622v1M45.5 623v2M46.5 625v1M47.5 626v1M48.5 627v1M49.5 628v1M50.5 629v1M51.5 630v1M52.5 631v1M53.5 632v1M54.5 633v1M55.5 634v1M56.5 635v1M57.5 636v1M58.5 637v1M59.5 638v1M60.5 639v1M61.5 640v1M62.5 641v1M63.5 642v1M64.5 643v1M65.5 644v1M66.5 645v1M67.5 646v1M80.5 649v1M83.5 651v1M124.5 656v1M125.5 657v1M126.5 658v1M127.5 659v1M128.5 660v1M131.5 662v1M132.5 663v1M133.5 664v1M134.5 665v1M135.5 666v1M149.5 671v1M225.5 663v1M226.5 664v1M284.5 655v1M335.5 643v1M336.5 642v1M339.5 640v1M340.5 639v1M341.5 638v1M369.5 626v1M370.5 624v2M371.5 623v1M372.5 622v1M373.5 620v2M374.5 619v1M375.5 618v1M376.5 617v1M377.5 616v1M378.5 615v1M379.5 613v2M380.5 612v1M381.5 611v1M382.5 610v1M383.5 609v1M384.5 608v1M385.5 607v1M388.5 605v1M389.5 604v1M435.5 605v1M436.5 606v1M437.5 607v1M438.5 608v2M439.5 610v1M440.5 611v1M441.5 612v1M442.5 613v2M443.5 615v1M444.5 616v1M445.5 617v2M446.5 619v1M447.5 620v1M448.5 621v2M449.5 623v1M450.5 624v1M451.5 625v2M452.5 627v1M453.5 628v1M454.5 629v2M455.5 631v1M456.5 632v1M457.5 633v2M458.5 635v1M641.5 629v1M648.5 625v1M653.5 622v1M654.5 621v1M655.5 620v1M656.5 619v1M657.5 618v1M660.5 616v1M661.5 615v1M662.5 614v1M663.5 613v1M695.5 616v1M698.5 618v1M703.5 621v1M706.5 623v1M709.5 625v1M710.5 626v1M711.5 627v1M712.5 628v1M713.5 629v1M714.5 630v1M715.5 631v1M716.5 632v1M717.5 633v1M718.5 634v1M719.5 635v1M720.5 636v1M721.5 637v1M722.5 638v1M723.5 639v1M724.5 640v1M725.5 641v1M726.5 642v1M727.5 643v2M728.5 645v2M729.5 647v1M730.5 648v2M731.5 650v2M740.5 656v1M743.5 658v1M744.5 659v1M747.5 661v1M830.5 685v1M831.5 686v1M832.5 687v1M835.5 689v1M836.5 690v1M837.5 691v1M844.5 695v1M847.5 697v1M850.5 699v1M853.5 701v1M856.5 703v1M964.5 704v1M965.5 705v1M968.5 707v1M969.5 708v1M1009.5 723v1M1010.5 724v1M1036.5 724v1M1037.5 723v1M1038.5 721v2M1039.5 720v1M1040.5 719v1M1041.5 718v1M1089.5 719v1M1094.5 722v1M1133.5 728v1M1136.5 726v1M1137.5 725v1M1146.5 720v1M1147.5 719v1M1150.5 717v1M1151.5 716v1M1152.5 715v1"/><path fill="none" stroke="#ffff00" d="M26 578.5h3M29 579.5h3M32 580.5h2M36 583.5h2M40 586.5h2M43 588.5h2M45 589.5h2M48 591.5h2M51 593.5h2M439 604.5h5M435 605.5h4M444 605.5h6M432 606.5h3M450 606.5h4M430 607.5h2M454 607.5h2M428 608.5h2M456 608.5h2M425 609.5h3M458 609.5h2M423 610.5h2M460 610.5h2M421 611.5h2M462 611.5h2M418 612.5h3M464 612.5h2M416 613.5h2M414 614.5h2M467 614.5h2M411 615.5h3M469 615.5h2M409 616.5h2M471 616.5h2M407 617.5h2M702 617.5h15M405 618.5h2M474 618.5h2M696 618.5h6M717 618.5h4M476 619.5h2M691 619.5h5M721 619.5h4M687 620.5h4M725 620.5h3M401 621.5h2M479 621.5h2M684 621.5h3M728 621.5h2M481 622.5h2M680 622.5h4M730 622.5h2M398 623.5h2M483 623.5h2M677 623.5h3M732 623.5h2M485 624.5h2M675 624.5h2M395 625.5h2M487 625.5h2M673 625.5h2M393 626.5h2M489 626.5h2M670 626.5h3M736 626.5h2M391 627.5h2M668 627.5h2M492 628.5h2M665 628.5h3M388 629.5h2M494 629.5h2M661 629.5h4M740 629.5h2M386 630.5h2M496 630.5h2M657 630.5h4M384 631.5h2M498 631.5h2M653 631.5h4M382 632.5h2M500 632.5h2M649 632.5h4M744 632.5h2M380 633.5h2M502 633.5h2M645 633.5h4M91 634.5h2M378 634.5h2M504 634.5h3M639 634.5h6M376 635.5h2M507 635.5h6M546 635.5h66M633 635.5h6M374 636.5h2M513 636.5h6M542 636.5h4M612 636.5h21M749 636.5h2M95 637.5h2M372 637.5h2M519 637.5h23M370 638.5h2M98 639.5h2M367 639.5h3M364 640.5h3M754 640.5h2M361 641.5h3M102 642.5h2M357 642.5h4M104 643.5h2M354 643.5h3M106 644.5h3M351 644.5h3M759 644.5h2M109 645.5h2M348 645.5h3M111 646.5h3M346 646.5h2M114 647.5h3M343 647.5h3M763 647.5h2M117 648.5h3M340 648.5h3M120 649.5h3M335 649.5h5M766 649.5h2M123 650.5h3M329 650.5h6M126 651.5h3M322 651.5h7M129 652.5h3M317 652.5h5M770 652.5h2M132 653.5h2M313 653.5h4M134 654.5h3M309 654.5h4M773 654.5h2M137 655.5h3M305 655.5h4M140 656.5h2M301 656.5h4M776 656.5h2M142 657.5h2M297 657.5h4M144 658.5h2M293 658.5h4M146 659.5h5M288 659.5h5M780 659.5h2M151 660.5h7M284 660.5h4M782 660.5h2M158 661.5h5M259 661.5h25M784 661.5h2M163 662.5h4M253 662.5h6M786 662.5h2M167 663.5h3M248 663.5h5M788 663.5h2M170 664.5h4M237 664.5h11M790 664.5h2M174 665.5h4M226 665.5h11M792 665.5h2M178 666.5h4M220 666.5h6M794 666.5h2M182 667.5h4M214 667.5h6M796 667.5h2M186 668.5h4M208 668.5h6M798 668.5h2M190 669.5h18M800 669.5h4M804 670.5h4M808 671.5h3M811 672.5h4M815 673.5h3M818 674.5h4M822 675.5h3M825 676.5h4M829 677.5h3M832 678.5h4M836 679.5h3M839 680.5h3M842 681.5h4M846 682.5h3M849 683.5h3M852 684.5h3M855 685.5h2M857 686.5h2M859 687.5h2M861 688.5h2M863 689.5h2M865 690.5h2M867 691.5h2M869 692.5h2M871 693.5h2M873 694.5h2M875 695.5h2M877 696.5h2M879 697.5h2M881 698.5h3M884 699.5h2M886 700.5h2M888 701.5h2M890 702.5h2M892 703.5h4M959 703.5h19M896 704.5h4M953 704.5h6M978 704.5h6M900 705.5h4M947 705.5h6M984 705.5h5M904 706.5h6M941 706.5h6M989 706.5h4M910 707.5h7M930 707.5h11M993 707.5h4M917 708.5h13M997 708.5h4M1001 709.5h4M1005 710.5h4M1009 711.5h3M1012 712.5h2M1014 713.5h2M1016 714.5h2M1018 715.5h3M1021 716.5h2M1023 717.5h2M1083 717.5h27M1025 718.5h2M1077 718.5h6M1110 718.5h5M1027 719.5h4M1070 719.5h7M1115 719.5h4M1031 720.5h5M1062 720.5h8M1119 720.5h4M1036 721.5h26M1123 721.5h4M1127 722.5h7M1134 723.5h12M1146 724.5h7M34.5 581v1M35.5 582v1M38.5 584v1M39.5 585v1M42.5 587v1M47.5 590v1M50.5 592v1M53.5 594v1M54.5 595v1M55.5 596v1M56.5 597v1M57.5 598v1M58.5 599v1M59.5 600v1M60.5 601v1M61.5 602v1M62.5 603v1M63.5 604v1M64.5 605v1M65.5 606v1M66.5 607v1M67.5 608v1M68.5 609v1M69.5 610v1M70.5 611v1M71.5 612v2M72.5 614v1M73.5 615v1M74.5 616v1M75.5 617v1M76.5 618v1M77.5 619v1M78.5 620v1M79.5 621v1M80.5 622v1M81.5 623v1M82.5 624v1M83.5 625v1M84.5 626v2M85.5 628v1M86.5 629v1M87.5 630v1M88.5 631v1M89.5 632v1M90.5 633v1M93.5 635v1M94.5 636v1M97.5 638v1M100.5 640v1M101.5 641v1M390.5 628v1M397.5 624v1M400.5 622v1M403.5 620v1M404.5 619v1M466.5 613v1M473.5 617v1M478.5 620v1M491.5 627v1M734.5 624v1M735.5 625v1M738.5 627v1M739.5 628v1M742.5 630v1M743.5 631v1M746.5 633v1M747.5 634v1M748.5 635v1M751.5 637v1M752.5 638v1M753.5 639v1M756.5 641v1M757.5 642v1M758.5 643v1M761.5 645v1M762.5 646v1M765.5 648v1M768.5 650v1M769.5 651v1M772.5 653v1M775.5 655v1M778.5 657v1M779.5 658v1"/><text x="22" y="572.36" font-size="12" fill="#e0e0e0" stroke="#e0e0e0">新</text><text x="34.3" y="571.6" font-size="12" fill="#d8d8d8" stroke="#d8d8d8">DMA(10,50,10) DDD: -0.802</text><path d="M190 564h1v1h1v1h1v1h-2v8h-1v-8h-2v-1h1v-1h1z" fill="#e62a2a"/><text x="197.7" y="571.6" font-size="12" fill="#ffff00" stroke="#ffff00" textLength="63.5" lengthAdjust="spacingAndGlyphs">AMA: -0.798</text><path d="M264 564h1v8h-1z" fill="#54ffff" fill-opacity=".62"/><path d="M262 572h5v1h-1v1h-1v1h-1v-1h-1v-1h-1z" fill="#54ffff"/><line x1="22.5" y1="731" x2="22.5" y2="734" stroke="#8c0000"/><text x="23.3" y="743" font-size="12" fill="#ff3232" stroke="#ff3232">02</text><line x1="138.5" y1="731" x2="138.5" y2="734" stroke="#8c0000"/><text x="139.3" y="743" font-size="12" fill="#ff3232" stroke="#ff3232">03</text><line x1="292.5" y1="731" x2="292.5" y2="734" stroke="#8c0000"/><text x="293.3" y="743" font-size="12" fill="#ff3232" stroke="#ff3232">04</text><line x1="439.5" y1="731" x2="439.5" y2="734" stroke="#8c0000"/><text x="440.3" y="743" font-size="12" fill="#ff3232" stroke="#ff3232">05</text><line x1="600.5" y1="731" x2="600.5" y2="734" stroke="#8c0000"/><text x="601.3" y="743" font-size="12" fill="#ff3232" stroke="#ff3232">06</text><line x1="747.5" y1="731" x2="747.5" y2="734" stroke="#8c0000"/><text x="748.3" y="743" font-size="12" fill="#ff3232" stroke="#ff3232">07</text><line x1="900.5" y1="731" x2="900.5" y2="734" stroke="#8c0000"/><text x="901.3" y="743" font-size="12" fill="#ff3232" stroke="#ff3232">08</text><line x1="1062.5" y1="731" x2="1062.5" y2="734" stroke="#8c0000"/><text x="1063.3" y="743" font-size="12" fill="#ff3232" stroke="#ff3232">09</text><rect x="1177" y="731" width="44" height="8" fill="#48008c"/><clipPath id="cp1"><rect x="1177" y="731" width="44" height="8"/></clipPath><text x="1175" y="744.1" font-size="12" fill="#ff3232" stroke="#ff3232" clip-path="url(#cp1)">09-18</text><rect x="1220" y="731" width="1" height="8" fill="#900000"/><rect x="1209" y="736" width="9" height="1" fill="#ff3232"/><rect x="21" y="749" width="32" height="15" fill="#c4c4c4"/><rect x="22" y="750" width="31" height="14" fill="#484848"/><rect x="22" y="750" width="30" height="13" fill="#878787"/><text x="24.5" y="760.86" font-size="12" fill="#000" stroke="#000">设置</text><rect x="56" y="749" width="55" height="15" fill="#c4c4c4"/><rect x="57" y="750" width="54" height="14" fill="#484848"/><rect x="57" y="750" width="53" height="13" fill="#878787"/><text x="60" y="760.86" font-size="12" fill="#000" stroke="#000">指标平台</text><path d="M113.8 749H161.3L165.2 757.8L162.1 764H120.5Z" fill="#999999" shape-rendering="geometricPrecision"/><path d="M114.8 749.5H161.3" stroke="#b4b4b4" fill="none"/><text x="140.9" y="760.8" font-size="11.5" fill="#000020" stroke="#000020" text-anchor="middle">MACD</text><path d="M162.3 749H197.8L201.7 757.8L198.6 764H169Z" fill="#999999" shape-rendering="geometricPrecision"/><path d="M163.3 749.5H197.8" stroke="#b4b4b4" fill="none"/><text x="183.4" y="760.8" font-size="11.5" fill="#000020" stroke="#000020" text-anchor="middle">KDJ</text><path d="M198.8 749H231.7L235.6 757.8L232.5 764H205.5Z" fill="#999999" shape-rendering="geometricPrecision"/><path d="M199.8 749.5H231.7" stroke="#b4b4b4" fill="none"/><text x="218.6" y="760.8" font-size="11.5" fill="#000020" stroke="#000020" text-anchor="middle">RSI</text><path d="M232.7 749H277.3L281.2 757.8L278.1 764H239.4Z" fill="#999999" shape-rendering="geometricPrecision"/><path d="M233.7 749.5H277.3" stroke="#b4b4b4" fill="none"/><text x="258.35" y="760.8" font-size="11.5" fill="#000020" stroke="#000020" text-anchor="middle">BOLL</text><path d="M278.3 749H318.7L322.6 757.8L319.5 764H285Z" fill="#999999" shape-rendering="geometricPrecision"/><path d="M279.3 749.5H318.7" stroke="#b4b4b4" fill="none"/><text x="301.85" y="760.8" font-size="11.5" fill="#000020" stroke="#000020" text-anchor="middle">W&amp;R</text><path d="M319.7 749H353.9L357.8 757.8L354.7 764H326.4Z" fill="#999999" shape-rendering="geometricPrecision"/><path d="M320.7 749.5H353.9" stroke="#b4b4b4" fill="none"/><text x="340.15" y="760.8" font-size="11.5" fill="#000020" stroke="#000020" text-anchor="middle">DMI</text><path d="M354.9 749H394L397.9 757.8L394.8 764H361.6Z" fill="#999999" shape-rendering="geometricPrecision"/><path d="M355.9 749.5H394" stroke="#b4b4b4" fill="none"/><text x="377.8" y="760.8" font-size="11.5" fill="#000020" stroke="#000020" text-anchor="middle">BIAS</text><path d="M395 749H426L429.9 757.8L426.8 764H401.7Z" fill="#999999" shape-rendering="geometricPrecision"/><path d="M396 749.5H426" stroke="#b4b4b4" fill="none"/><text x="413.85" y="760.8" font-size="11.5" fill="#000020" stroke="#000020" text-anchor="middle">ASI</text><path d="M427 749H455.9L459.8 757.8L456.7 764H433.7Z" fill="#999999" shape-rendering="geometricPrecision"/><path d="M428 749.5H455.9" stroke="#b4b4b4" fill="none"/><text x="444.8" y="760.8" font-size="11.5" fill="#000020" stroke="#000020" text-anchor="middle">VR</text><path d="M456.9 749H502.7L506.6 757.8L503.5 764H463.6Z" fill="#999999" shape-rendering="geometricPrecision"/><path d="M457.9 749.5H502.7" stroke="#b4b4b4" fill="none"/><text x="483.15" y="760.8" font-size="11.5" fill="#000020" stroke="#000020" text-anchor="middle">ARBR</text><path d="M503.7 749H543.4L547.3 757.8L544.2 764H510.4Z" fill="#999999" shape-rendering="geometricPrecision"/><path d="M504.7 749.5H543.4" stroke="#b4b4b4" fill="none"/><text x="526.9" y="760.8" font-size="11.5" fill="#000020" stroke="#000020" text-anchor="middle">DPO</text><path d="M544.4 749H582.4L586.3 757.8L583.2 764H551.1Z" fill="#999999" shape-rendering="geometricPrecision"/><path d="M545.4 749.5H582.4" stroke="#b4b4b4" fill="none"/><text x="566.75" y="760.8" font-size="11.5" fill="#000020" stroke="#000020" text-anchor="middle">TRIX</text><path d="M583.9 749H642.1L634.8 764H591.3Z" fill="#800000" shape-rendering="geometricPrecision"/><text x="593.7" y="761.36" font-size="12" fill="#fff" stroke="#fff">新</text><text x="606" y="760.8" font-size="12" fill="#fff" stroke="#fff">DMA</text><path d="M643.6 749H666.1L670 757.8L666.9 764H642.2L639.2 757Z" fill="#999999" shape-rendering="geometricPrecision"/><path d="M644 749.5H666" stroke="#b4b4b4" fill="none"/><text x="654.7" y="760.8" font-size="11.5" fill="#000020" stroke="#000020" text-anchor="middle">BBI</text><path d="M667.1 749H706.7L710.6 757.8L707.5 764H673.8Z" fill="#999999" shape-rendering="geometricPrecision"/><path d="M668.1 749.5H706.7" stroke="#b4b4b4" fill="none"/><text x="690.25" y="760.8" font-size="11.5" fill="#000020" stroke="#000020" text-anchor="middle">MTM</text><path d="M707.7 749H744.8L748.7 757.8L745.6 764H714.4Z" fill="#999999" shape-rendering="geometricPrecision"/><path d="M708.7 749.5H744.8" stroke="#b4b4b4" fill="none"/><text x="729.6" y="760.8" font-size="11.5" fill="#000020" stroke="#000020" text-anchor="middle">OBV</text><path d="M745.8 749H782.4L786.3 757.8L783.2 764H752.5Z" fill="#999999" shape-rendering="geometricPrecision"/><path d="M746.8 749.5H782.4" stroke="#b4b4b4" fill="none"/><text x="767.45" y="760.8" font-size="11.5" fill="#000020" stroke="#000020" text-anchor="middle">SAR</text><path d="M783.4 749H842.7L836.9 764H790.1Z" fill="#999999" shape-rendering="geometricPrecision"/><path d="M784.4 749.5H842" stroke="#b4b4b4" fill="none"/><text x="814.35" y="760.8" font-size="11.5" fill="#000020" stroke="#000020" text-anchor="middle">EXPMA</text><rect x="22" y="765" width="1204" height="2" fill="#8c0000"/><rect x="22" y="767" width="62" height="19" fill="#8b0000"/><text x="29" y="780.56" font-size="12" fill="#fff" stroke="#fff" style="stroke-width:.36px">金银资讯</text><rect x="86" y="767" width="61" height="19" fill="#999999"/><text x="92.5" y="780.56" font-size="12" fill="#101010" stroke="#101010">国际黄金</text><rect x="149" y="767" width="48.5" height="19" fill="#999999"/><text x="155" y="780.56" font-size="12" fill="#101010" stroke="#101010">论股堂</text><line x1="84" y1="786.5" x2="1226" y2="786.5" stroke="#8c0000"/><text x="252.5" y="804.2" font-size="15" fill="#d8d8d8" stroke="#d8d8d8" font-weight="300">猎金实时解盘</text><text x="851.5" y="804.2" font-size="15" fill="#d8d8d8" stroke="#d8d8d8" font-weight="300">猎金独家精评</text><clipPath id="cp2"><rect x="0" y="800" width="1226" height="13"/></clipPath><text x="29" y="821.7" font-size="15" fill="#ffff00" stroke="#ffff00" clip-path="url(#cp2)">【异动】行情先锋！白银涨幅达</text><rect x="281" y="809" width="2" height="4" fill="#ffff00"/><text x="626" y="821.7" font-size="15" fill="#ffff00" stroke="#ffff00" clip-path="url(#cp2)">【数据】美国利率上升金银并未下跌<tspan x="873.5">行情将突破？</tspan></text><rect x="1217" y="787" width="9" height="26" fill="#555"/><rect x="1217" y="787" width="9" height="1" fill="#788080"/><rect x="1217" y="787" width="1" height="26" fill="#707070"/><rect x="1217" y="798" width="9" height="1" fill="#000"/><rect x="1217" y="808" width="9" height="1" fill="#6a6a6a"/><path d="M1220.5 796l3-5.5 3 5.5z" fill="#c4c4c4" shape-rendering="geometricPrecision"/><rect x="1221" y="811" width="5" height="2" fill="#c4c4c4"/><text x="9.5" y="776.49" font-size="17.6" fill="#ffffff" stroke="#ffffff" opacity="0.78">第一纸白银分析网</text><text x="10.5" y="797.3" font-size="15.1" fill="#a8a8a8" stroke="#a8a8a8" font-weight="bold" font-family="Liberation Mono">www.diyizby.com</text></svg></body></html>
